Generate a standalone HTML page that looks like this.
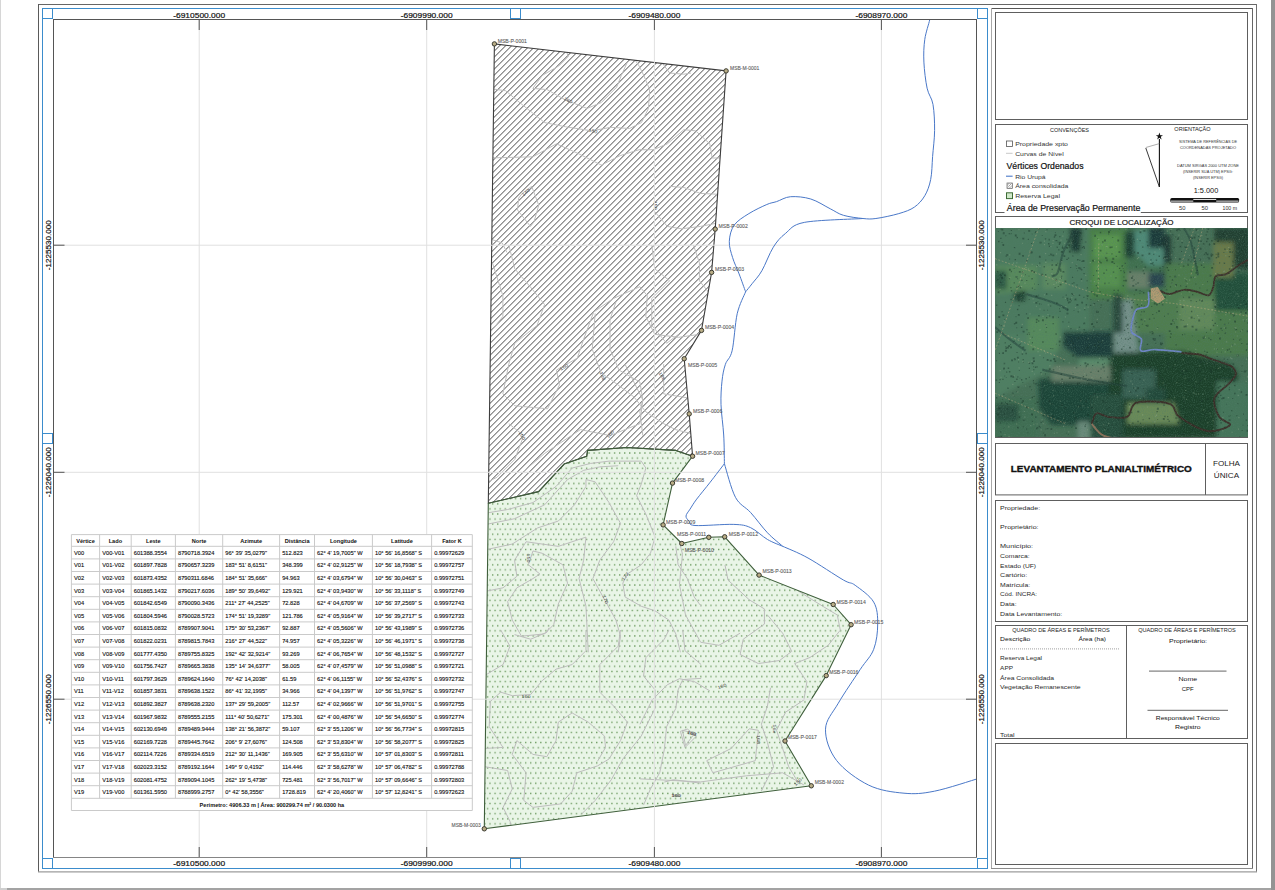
<!DOCTYPE html>
<html><head><meta charset="utf-8"><style>
html,body{margin:0;padding:0;background:#fff;}
body{width:1275px;height:890px;overflow:hidden;position:relative;}
svg{position:absolute;left:0;top:0;}
text{font-family:"Liberation Sans",sans-serif;}
</style></head><body>
<svg width="1275" height="890" viewBox="0 0 1275 890">
<defs>
<pattern id="hatch" patternUnits="userSpaceOnUse" width="6" height="6" patternTransform="translate(-0.6,0)">
<path d="M-1,7 L7,-1 M-4,4 L4,-4 M2,10 L10,2" stroke="#333" stroke-width="0.9"/>
</pattern>
<pattern id="dots" patternUnits="userSpaceOnUse" width="5.08" height="10.16" x="0" y="-1.4">
<rect x="0" y="0" width="5.08" height="10.16" fill="#e9f5e7"/>
<rect x="1.7" y="1.6" width="1.3" height="1.4" fill="#6a9a5e"/>
<rect x="4.24" y="6.68" width="1.3" height="1.4" fill="#6a9a5e"/>
<rect x="-0.84" y="6.68" width="1.3" height="1.4" fill="#6a9a5e"/>
</pattern>
<pattern id="lhatch" patternUnits="userSpaceOnUse" width="2.5" height="2.5">
<path d="M-0.5,3 L3,-0.5" stroke="#666" stroke-width="0.6"/>
</pattern>
<filter id="blur1"><feGaussianBlur stdDeviation="1.2"/></filter>
<filter id="blur2" x="-10%" y="-10%" width="120%" height="120%"><feGaussianBlur stdDeviation="9"/></filter>
<filter id="noise" x="0" y="0" width="100%" height="100%"><feTurbulence type="fractalNoise" baseFrequency="0.9" numOctaves="2" seed="3"/><feColorMatrix type="matrix" values="0 0 0 0 0.08  0 0 0 0 0.2  0 0 0 0 0.14  0 0 0 -2.2 1.25"/></filter>
<clipPath id="mapclip"><rect x="54" y="20" width="922" height="837"/></clipPath>
<clipPath id="satclip"><rect x="995" y="228" width="253" height="209"/></clipPath>
</defs>
<rect x="0" y="0" width="1" height="890" stroke="none" fill="#d6d6d6" stroke-width="1"/>
<rect x="7" y="888" width="1264" height="2" stroke="none" fill="#a3a3a3" stroke-width="1"/>
<rect x="0" y="888" width="7" height="2" stroke="none" fill="#cfcfcf" stroke-width="1"/>
<rect x="1271" y="0" width="4" height="890" stroke="none" fill="#939393" stroke-width="1"/>
<line x1="38" y1="4.5" x2="1257" y2="4.5" stroke="#666" stroke-width="1"/>
<line x1="38.5" y1="4" x2="38.5" y2="872" stroke="#5a5a5a" stroke-width="1"/>
<line x1="1256.5" y1="4" x2="1256.5" y2="872" stroke="#707070" stroke-width="1"/>
<line x1="38" y1="871.8" x2="1257" y2="871.8" stroke="#9c9c9c" stroke-width="1.2"/>
<rect x="53.5" y="19.5" width="923.0" height="838.0" stroke="none" fill="#fff" stroke-width="1"/>
<g clip-path="url(#mapclip)">
<path d="M494.4,43.9 L726.1,70.9 L715.2,229.1 L711.6,272.4 L701.5,330.4 L684.2,358.8 L689.2,413.9 L692.6,456.2 L675.9,450.4 L626.9,447.5 L587.6,450.4 L586.7,456.3 L564.1,464.1 L538.6,491.6 L488.3,503.3 Z" fill="url(#hatch)" stroke="none"/>
<path d="M488.3,503.3 L538.6,491.6 L564.1,464.1 L586.7,456.3 L587.6,450.4 L626.9,447.5 L675.9,450.4 L692.6,456.2 L672.5,483.1 L663.1,524.9 L681.8,543.5 L708.8,537.3 L724.7,536.8 L759.1,575.1 L833.2,604.5 L851.1,624.7 L826.2,675.6 L785.0,741.0 L811.3,785.8 L484.3,828.8 Z" fill="url(#dots)" stroke="none"/>
<clipPath id="propclip"><path d="M494.4,43.9 L726.1,70.9 L715.2,229.1 L711.6,272.4 L701.5,330.4 L684.2,358.8 L689.2,413.9 L692.6,456.2 L675.9,450.4 L626.9,447.5 L587.6,450.4 L586.7,456.3 L564.1,464.1 L538.6,491.6 L488.3,503.3 Z M488.3,503.3 L538.6,491.6 L564.1,464.1 L586.7,456.3 L587.6,450.4 L626.9,447.5 L675.9,450.4 L692.6,456.2 L672.5,483.1 L663.1,524.9 L681.8,543.5 L708.8,537.3 L724.7,536.8 L759.1,575.1 L833.2,604.5 L851.1,624.7 L826.2,675.6 L785.0,741.0 L811.3,785.8 L484.3,828.8 Z"/></clipPath>
<g clip-path="url(#propclip)">
<g transform="translate(488,40) scale(0.23599)">
<path d="M190.0,205.0 L250.0,210.0 L330.0,255.0 L420.0,290.0 L480.0,265.0 L545.0,200.0 L565.0,150.0 L590.0,95.0" fill="none" stroke="#bdbdbd" stroke-width="1" vector-effect="non-scaling-stroke" stroke-linejoin="round"/>
<path d="M190.0,205.0 L230.0,150.0 L300.0,110.0 L340.0,70.0 L330.0,40.0" fill="none" stroke="#bdbdbd" stroke-width="1" vector-effect="non-scaling-stroke" stroke-linejoin="round"/>
<path d="M0.0,205.0 L75.0,215.0 L140.0,270.0 L240.0,350.0 L330.0,368.0 L440.0,385.0 L520.0,370.0 L600.0,375.0 L650.0,350.0 L680.0,290.0 L685.0,210.0 L660.0,150.0 L640.0,110.0 L620.0,80.0" fill="none" stroke="#bdbdbd" stroke-width="1" vector-effect="non-scaling-stroke" stroke-linejoin="round"/>
<path d="M0.0,500.0 L190.0,495.0 L290.0,440.0 L380.0,480.0 L480.0,530.0 L560.0,490.0 L640.0,465.0 L700.0,465.0 L760.0,440.0 L830.0,380.0 L880.0,385.0 L940.0,440.0 L950.0,500.0 L1000.0,500.0" fill="none" stroke="#bdbdbd" stroke-width="1" vector-effect="non-scaling-stroke" stroke-linejoin="round"/>
<path d="M145.0,650.0 L185.0,620.0 L215.0,700.0 L195.0,770.0 L180.0,790.0 L125.0,720.0 L130.0,670.0 Z" fill="none" stroke="#bdbdbd" stroke-width="1" vector-effect="non-scaling-stroke" stroke-linejoin="round"/>
<path d="M740.0,100.0 L770.0,140.0 L830.0,145.0 L860.0,140.0" fill="none" stroke="#bdbdbd" stroke-width="1" vector-effect="non-scaling-stroke" stroke-linejoin="round"/>
<path d="M770.0,620.0 L830.0,625.0 L900.0,650.0 L1000.0,655.0" fill="none" stroke="#bdbdbd" stroke-width="1" vector-effect="non-scaling-stroke" stroke-linejoin="round"/>
<path d="M700.0,720.0 L760.0,790.0 L820.0,800.0 L900.0,790.0 L1000.0,770.0" fill="none" stroke="#bdbdbd" stroke-width="1" vector-effect="non-scaling-stroke" stroke-linejoin="round"/>
<path d="M0.0,840.0 L60.0,860.0 L80.0,900.0" fill="none" stroke="#bdbdbd" stroke-width="1" vector-effect="non-scaling-stroke" stroke-linejoin="round"/>
<g transform="translate(340,255) rotate(28) scale(4.2375)"><text x="0" y="1.6" font-size="4.4" text-anchor="middle" fill="#444" textLength="9" lengthAdjust="spacingAndGlyphs">160</text></g>
<g transform="translate(445,385) rotate(15) scale(4.2375)"><text x="0" y="1.6" font-size="4.4" text-anchor="middle" fill="#444" textLength="9" lengthAdjust="spacingAndGlyphs">150</text></g>
<g transform="translate(160,645) rotate(-42) scale(4.2375)"><text x="0" y="1.6" font-size="4.4" text-anchor="middle" fill="#444" textLength="9" lengthAdjust="spacingAndGlyphs">140</text></g>
<g transform="translate(710,700) rotate(90) scale(4.2375)"><text x="0" y="1.6" font-size="4.4" text-anchor="middle" fill="#444" textLength="9" lengthAdjust="spacingAndGlyphs">150</text></g>
</g>
<g transform="translate(485,245) scale(0.29780)">
<path d="M25.0,60.0 L60.0,170.0 L60.0,240.0 L20.0,290.0" fill="none" stroke="#bdbdbd" stroke-width="1" vector-effect="non-scaling-stroke" stroke-linejoin="round"/>
<path d="M80.0,0.0 L100.0,80.0 L160.0,150.0 L200.0,200.0 L175.0,270.0 L100.0,330.0 L80.0,400.0 L60.0,500.0 L100.0,540.0 L210.0,550.0 L250.0,470.0 L240.0,420.0 L310.0,380.0 L330.0,320.0 L365.0,225.0 L430.0,180.0 L520.0,140.0 L545.0,170.0 L540.0,240.0 L570.0,300.0 L650.0,310.0 L720.0,300.0" fill="none" stroke="#bdbdbd" stroke-width="1" vector-effect="non-scaling-stroke" stroke-linejoin="round"/>
<path d="M560.0,0.0 L570.0,80.0 L620.0,120.0 L560.0,180.0 L560.0,270.0 L610.0,330.0 L650.0,300.0" fill="none" stroke="#bdbdbd" stroke-width="1" vector-effect="non-scaling-stroke" stroke-linejoin="round"/>
<path d="M700.0,0.0 L720.0,60.0 L720.0,120.0 L760.0,170.0" fill="none" stroke="#bdbdbd" stroke-width="1" vector-effect="non-scaling-stroke" stroke-linejoin="round"/>
<path d="M370.0,230.0 L360.0,350.0 L390.0,430.0 L420.0,450.0 L500.0,510.0 L540.0,560.0 L600.0,600.0 L640.0,620.0 L720.0,640.0" fill="none" stroke="#bdbdbd" stroke-width="1" vector-effect="non-scaling-stroke" stroke-linejoin="round"/>
<path d="M440.0,190.0 L420.0,250.0 L420.0,350.0 L450.0,420.0 L520.0,460.0 L530.0,520.0 L520.0,560.0 L530.0,640.0" fill="none" stroke="#bdbdbd" stroke-width="1" vector-effect="non-scaling-stroke" stroke-linejoin="round"/>
<path d="M470.0,400.0 L500.0,460.0 L530.0,520.0 L520.0,600.0 L420.0,640.0 L320.0,620.0 L200.0,700.0 L130.0,760.0" fill="none" stroke="#bdbdbd" stroke-width="1" vector-effect="non-scaling-stroke" stroke-linejoin="round"/>
<path d="M80.0,600.0 L130.0,640.0 L100.0,720.0 L40.0,780.0 L0.0,800.0" fill="none" stroke="#bdbdbd" stroke-width="1" vector-effect="non-scaling-stroke" stroke-linejoin="round"/>
<path d="M600.0,400.0 L600.0,500.0 L720.0,520.0" fill="none" stroke="#bdbdbd" stroke-width="1" vector-effect="non-scaling-stroke" stroke-linejoin="round"/>
<g transform="translate(265,410) rotate(-30) scale(3.3580)"><text x="0" y="1.6" font-size="4.4" text-anchor="middle" fill="#444" textLength="9" lengthAdjust="spacingAndGlyphs">150</text></g>
<g transform="translate(395,440) rotate(70) scale(3.3580)"><text x="0" y="1.6" font-size="4.4" text-anchor="middle" fill="#444" textLength="9" lengthAdjust="spacingAndGlyphs">146</text></g>
<g transform="translate(595,440) rotate(60) scale(3.3580)"><text x="0" y="1.6" font-size="4.4" text-anchor="middle" fill="#444" textLength="9" lengthAdjust="spacingAndGlyphs">146</text></g>
<g transform="translate(125,640) rotate(60) scale(3.3580)"><text x="0" y="1.6" font-size="4.4" text-anchor="middle" fill="#444" textLength="9" lengthAdjust="spacingAndGlyphs">150</text></g>
<g transform="translate(420,635) rotate(-50) scale(3.3580)"><text x="0" y="1.6" font-size="4.4" text-anchor="middle" fill="#444" textLength="9" lengthAdjust="spacingAndGlyphs">150</text></g>
</g>
<g transform="translate(480,445) scale(0.23036)">
<path d="M0.0,300.0 L120.0,280.0 L230.0,250.0 L330.0,180.0 L400.0,100.0 L480.0,80.0 L560.0,70.0 L700.0,70.0 L720.0,100.0 L700.0,170.0 L680.0,220.0 L720.0,300.0 L760.0,400.0 L740.0,470.0 L700.0,520.0 L640.0,560.0 L620.0,600.0 L630.0,660.0 L700.0,700.0 L760.0,720.0 L820.0,760.0 L850.0,820.0 L870.0,900.0" fill="none" stroke="#bdbdbd" stroke-width="1" vector-effect="non-scaling-stroke" stroke-linejoin="round"/>
<path d="M0.0,350.0 L150.0,320.0 L280.0,260.0 L380.0,150.0 L450.0,110.0 L520.0,95.0 L600.0,90.0" fill="none" stroke="#bdbdbd" stroke-width="1" vector-effect="non-scaling-stroke" stroke-linejoin="round"/>
<path d="M0.0,460.0 L140.0,430.0 L250.0,360.0 L340.0,330.0 L410.0,260.0 L460.0,180.0 L460.0,150.0 L500.0,160.0 L560.0,250.0 L610.0,340.0 L580.0,420.0 L520.0,500.0 L490.0,580.0 L540.0,670.0 L590.0,760.0 L610.0,830.0 L600.0,900.0" fill="none" stroke="#bdbdbd" stroke-width="1" vector-effect="non-scaling-stroke" stroke-linejoin="round"/>
<path d="M0.0,640.0 L100.0,620.0 L160.0,570.0 L150.0,500.0 L200.0,420.0 L340.0,440.0 L460.0,400.0 L450.0,500.0 L430.0,580.0 L460.0,700.0 L470.0,900.0" fill="none" stroke="#bdbdbd" stroke-width="1" vector-effect="non-scaling-stroke" stroke-linejoin="round"/>
<path d="M230.0,460.0 L270.0,470.0 L360.0,520.0 L380.0,600.0 L340.0,690.0 L320.0,780.0 L280.0,820.0 L180.0,830.0 L140.0,760.0 L120.0,680.0 L160.0,620.0 L230.0,580.0 L260.0,560.0 L210.0,520.0 Z" fill="none" stroke="#bdbdbd" stroke-width="1" vector-effect="non-scaling-stroke" stroke-linejoin="round"/>
<path d="M850.0,440.0 L860.0,520.0 L900.0,580.0 L930.0,660.0 L960.0,700.0" fill="none" stroke="#bdbdbd" stroke-width="1" vector-effect="non-scaling-stroke" stroke-linejoin="round"/>
<g transform="translate(210,490) rotate(90) scale(4.3410)"><text x="0" y="1.6" font-size="4.4" text-anchor="middle" fill="#444" textLength="9" lengthAdjust="spacingAndGlyphs">150</text></g>
<g transform="translate(545,670) rotate(70) scale(4.3410)"><text x="0" y="1.6" font-size="4.4" text-anchor="middle" fill="#444" textLength="9" lengthAdjust="spacingAndGlyphs">170</text></g>
<g transform="translate(630,570) rotate(-50) scale(4.3410)"><text x="0" y="1.6" font-size="4.4" text-anchor="middle" fill="#444" textLength="9" lengthAdjust="spacingAndGlyphs">172</text></g>
</g>
<g transform="translate(480,630) scale(0.23036)">
<path d="M90.0,0.0 L130.0,70.0 L100.0,150.0 L0.0,210.0" fill="none" stroke="#bdbdbd" stroke-width="1" vector-effect="non-scaling-stroke" stroke-linejoin="round"/>
<path d="M150.0,20.0 L220.0,40.0 L290.0,10.0 L300.0,-10.0" fill="none" stroke="#bdbdbd" stroke-width="1" vector-effect="non-scaling-stroke" stroke-linejoin="round"/>
<path d="M460.0,0.0 L460.0,90.0 L400.0,150.0 L330.0,170.0 L270.0,220.0 L220.0,280.0 L140.0,285.0 L90.0,270.0 L45.0,310.0 L40.0,420.0 L100.0,510.0 L0.0,515.0" fill="none" stroke="#bdbdbd" stroke-width="1" vector-effect="non-scaling-stroke" stroke-linejoin="round"/>
<path d="M610.0,0.0 L600.0,70.0 L520.0,150.0 L520.0,270.0 L580.0,330.0 L640.0,400.0 L610.0,480.0 L560.0,560.0 L510.0,590.0 L420.0,620.0 L400.0,700.0 L350.0,755.0 L230.0,770.0 L190.0,740.0 L200.0,620.0 L140.0,540.0 L160.0,480.0 L230.0,540.0 L290.0,550.0 L330.0,480.0 L340.0,400.0 L400.0,360.0 L470.0,400.0 L540.0,460.0 L545.0,510.0 L510.0,570.0" fill="none" stroke="#bdbdbd" stroke-width="1" vector-effect="non-scaling-stroke" stroke-linejoin="round"/>
<path d="M820.0,0.0 L800.0,40.0 L720.0,120.0 L710.0,200.0 L760.0,260.0 L760.0,340.0 L700.0,460.0 L620.0,560.0 L570.0,650.0 L500.0,740.0 L440.0,800.0" fill="none" stroke="#bdbdbd" stroke-width="1" vector-effect="non-scaling-stroke" stroke-linejoin="round"/>
<path d="M880.0,0.0 L890.0,90.0 L960.0,150.0" fill="none" stroke="#bdbdbd" stroke-width="1" vector-effect="non-scaling-stroke" stroke-linejoin="round"/>
<path d="M960.0,210.0 L880.0,215.0 L860.0,260.0 L850.0,340.0 L810.0,420.0 L800.0,520.0 L780.0,620.0 L740.0,690.0 L710.0,760.0" fill="none" stroke="#bdbdbd" stroke-width="1" vector-effect="non-scaling-stroke" stroke-linejoin="round"/>
<path d="M0.0,590.0 L120.0,610.0 L140.0,690.0 L100.0,770.0 L130.0,830.0 L150.0,900.0" fill="none" stroke="#bdbdbd" stroke-width="1" vector-effect="non-scaling-stroke" stroke-linejoin="round"/>
<path d="M800.0,660.0 L840.0,650.0 L960.0,665.0" fill="none" stroke="#bdbdbd" stroke-width="1" vector-effect="non-scaling-stroke" stroke-linejoin="round"/>
<path d="M870.0,440.0 L900.0,430.0 L940.0,460.0 L890.0,510.0 Z" fill="none" stroke="#bdbdbd" stroke-width="1" vector-effect="non-scaling-stroke" stroke-linejoin="round"/>
<g transform="translate(200,288) rotate(0) scale(4.3410)"><text x="0" y="1.6" font-size="4.4" text-anchor="middle" fill="#444" textLength="9" lengthAdjust="spacingAndGlyphs">160</text></g>
<g transform="translate(850,718) rotate(0) scale(4.3410)"><text x="0" y="1.6" font-size="4.4" text-anchor="middle" fill="#444" textLength="9" lengthAdjust="spacingAndGlyphs">160</text></g>
<g transform="translate(920,448) rotate(15) scale(4.3410)"><text x="0" y="1.6" font-size="4.4" text-anchor="middle" fill="#444" textLength="9" lengthAdjust="spacingAndGlyphs">168</text></g>
</g>
<g transform="translate(640,530) scale(0.30349)">
<path d="M280.0,115.0 L290.0,165.0 L360.0,230.0 L410.0,260.0 L410.0,310.0 L340.0,360.0 L330.0,410.0 L390.0,440.0 L460.0,430.0 L500.0,400.0 L470.0,340.0 L420.0,280.0" fill="none" stroke="#bdbdbd" stroke-width="1" vector-effect="non-scaling-stroke" stroke-linejoin="round"/>
<path d="M520.0,200.0 L600.0,250.0 L650.0,280.0 L660.0,330.0 L620.0,380.0 L560.0,420.0 L510.0,440.0 L550.0,500.0 L540.0,560.0 L480.0,600.0 L450.0,660.0 L470.0,720.0 L490.0,780.0 L520.0,830.0" fill="none" stroke="#bdbdbd" stroke-width="1" vector-effect="non-scaling-stroke" stroke-linejoin="round"/>
<path d="M120.0,0.0 L140.0,80.0 L130.0,180.0 L150.0,280.0 L200.0,370.0 L260.0,380.0 L330.0,340.0" fill="none" stroke="#bdbdbd" stroke-width="1" vector-effect="non-scaling-stroke" stroke-linejoin="round"/>
<path d="M0.0,640.0 L40.0,560.0 L90.0,510.0 L130.0,490.0 L180.0,500.0 L230.0,530.0" fill="none" stroke="#bdbdbd" stroke-width="1" vector-effect="non-scaling-stroke" stroke-linejoin="round"/>
<path d="M140.0,660.0 L180.0,670.0 L150.0,710.0 Z" fill="none" stroke="#bdbdbd" stroke-width="1" vector-effect="non-scaling-stroke" stroke-linejoin="round"/>
<path d="M220.0,760.0 L240.0,800.0 L380.0,760.0 L390.0,660.0 L360.0,655.0 L300.0,720.0 Z" fill="none" stroke="#bdbdbd" stroke-width="1" vector-effect="non-scaling-stroke" stroke-linejoin="round"/>
<path d="M0.0,820.0 L200.0,830.0 L350.0,810.0 L470.0,800.0 L540.0,840.0" fill="none" stroke="#bdbdbd" stroke-width="1" vector-effect="non-scaling-stroke" stroke-linejoin="round"/>
<path d="M430.0,520.0 L420.0,580.0 L400.0,640.0 L420.0,700.0 L440.0,780.0 L400.0,860.0" fill="none" stroke="#bdbdbd" stroke-width="1" vector-effect="non-scaling-stroke" stroke-linejoin="round"/>
<g transform="translate(270,515) rotate(-20) scale(3.2950)"><text x="0" y="1.6" font-size="4.4" text-anchor="middle" fill="#444" textLength="9" lengthAdjust="spacingAndGlyphs">160</text></g>
<g transform="translate(170,670) rotate(15) scale(3.2950)"><text x="0" y="1.6" font-size="4.4" text-anchor="middle" fill="#444" textLength="9" lengthAdjust="spacingAndGlyphs">160</text></g>
<g transform="translate(390,690) rotate(90) scale(3.2950)"><text x="0" y="1.6" font-size="4.4" text-anchor="middle" fill="#444" textLength="9" lengthAdjust="spacingAndGlyphs">168</text></g>
<g transform="translate(445,655) rotate(90) scale(3.2950)"><text x="0" y="1.6" font-size="4.4" text-anchor="middle" fill="#444" textLength="9" lengthAdjust="spacingAndGlyphs">16x</text></g>
<g transform="translate(520,830) rotate(-45) scale(3.2950)"><text x="0" y="1.6" font-size="4.4" text-anchor="middle" fill="#444" textLength="9" lengthAdjust="spacingAndGlyphs">150</text></g>
<g transform="translate(120,875) rotate(0) scale(3.2950)"><text x="0" y="1.6" font-size="4.4" text-anchor="middle" fill="#444" textLength="9" lengthAdjust="spacingAndGlyphs">160</text></g>
</g>
</g>
<path d="M494.4,43.9 L726.1,70.9 L715.2,229.1 L711.6,272.4 L701.5,330.4 L684.2,358.8 L689.2,413.9 L692.6,456.2 L675.9,450.4 L626.9,447.5 L587.6,450.4 L586.7,456.3 L564.1,464.1 L538.6,491.6 L488.3,503.3 Z" fill="none" stroke="#3d3d3d" stroke-width="1.1" stroke-linejoin="round"/>
<path d="M488.3,503.3 L538.6,491.6 L564.1,464.1 L586.7,456.3 L587.6,450.4 L626.9,447.5 L675.9,450.4 L692.6,456.2 L672.5,483.1 L663.1,524.9 L681.8,543.5 L708.8,537.3 L724.7,536.8 L759.1,575.1 L833.2,604.5 L851.1,624.7 L826.2,675.6 L785.0,741.0 L811.3,785.8 L484.3,828.8 Z" fill="none" stroke="#3f5f3b" stroke-width="1.1" stroke-linejoin="round"/>
<line x1="199.2" y1="19" x2="199.2" y2="857" stroke="#e0e0e0" stroke-width="1"/>
<line x1="426.7" y1="19" x2="426.7" y2="857" stroke="#e0e0e0" stroke-width="1"/>
<line x1="654.4" y1="19" x2="654.4" y2="857" stroke="#e0e0e0" stroke-width="1"/>
<line x1="881.4" y1="19" x2="881.4" y2="857" stroke="#e0e0e0" stroke-width="1"/>
<line x1="53" y1="245.2" x2="977" y2="245.2" stroke="#e0e0e0" stroke-width="1"/>
<line x1="53" y1="472.3" x2="977" y2="472.3" stroke="#e0e0e0" stroke-width="1"/>
<line x1="53" y1="699.2" x2="977" y2="699.2" stroke="#e0e0e0" stroke-width="1"/>
<path d="M929.7,15.0 C929.7,15.8 930.5,15.8 929.7,19.8 C928.9,23.9 925.8,32.2 924.8,39.3 C923.8,46.3 923.5,54.0 923.9,62.1 C924.3,70.2 925.6,81.1 927.1,88.2 C928.6,95.3 931.8,97.4 933.0,104.5 C934.2,111.6 934.7,121.9 934.6,130.6 C934.5,139.3 933.2,148.5 932.6,156.6 C932.0,164.7 932.0,172.9 930.7,179.4 C929.4,185.9 927.5,191.1 924.8,195.7 C922.1,200.3 918.7,204.1 914.4,207.1 C910.1,210.1 905.2,211.7 898.8,213.6 C892.4,215.5 881.9,217.7 875.9,218.5 C869.9,219.3 868.3,219.0 862.9,218.5 C857.5,218.0 848.8,216.9 843.4,215.3 C838.0,213.7 835.7,211.5 830.3,208.8 C824.9,206.1 817.4,201.0 810.8,199.0 C804.2,197.0 796.3,196.3 790.6,196.7 C784.9,197.1 780.6,200.3 776.6,201.6 C772.6,202.9 771.4,202.5 766.8,204.5 C762.2,206.5 754.3,210.2 748.9,213.6 C743.5,217.0 737.5,220.5 734.2,225.1 C730.9,229.7 729.6,235.9 729.3,241.3 C729.0,246.7 731.0,252.2 732.6,257.6 C734.2,263.0 736.9,268.2 739.1,273.9 C741.3,279.6 744.5,288.8 745.6,291.8" fill="none" stroke="#4a78c8" stroke-width="1" stroke-linejoin="round"/>
<path d="M862.9,218.5 C853.1,219.2 817.2,219.9 804.3,222.4 C791.4,224.9 790.6,229.4 785.4,233.5 C780.2,237.6 777.2,241.0 773.3,247.2 C769.4,253.4 765.4,264.6 761.9,270.7 C758.4,276.8 754.8,280.2 752.1,283.7 C749.4,287.2 746.7,290.4 745.6,291.8" fill="none" stroke="#4a78c8" stroke-width="1" stroke-linejoin="round"/>
<path d="M745.6,291.8 C744.2,295.4 739.5,303.9 737.2,313.7 C735.0,323.5 734.1,342.4 732.1,350.8 C730.1,359.2 727.1,359.2 725.4,364.3 C723.7,369.4 722.7,374.4 722.0,381.1 C721.3,387.8 720.7,395.7 721.0,404.7 C721.3,413.7 723.1,425.2 723.7,435.0 C724.3,444.8 724.3,458.9 724.4,463.7" fill="none" stroke="#4a78c8" stroke-width="1" stroke-linejoin="round"/>
<path d="M724.4,463.7 C722.0,466.8 714.8,476.3 710.2,482.2 C705.6,488.1 700.1,494.6 696.7,499.1 C693.3,503.6 691.8,506.4 690.0,509.2 C688.2,512.0 686.2,514.0 686.0,516.0 C685.8,518.0 687.5,519.4 689.0,521.0 C690.5,522.6 687.5,524.9 695.0,525.5 C702.5,526.1 724.5,524.0 733.8,524.4 C743.1,524.8 745.1,525.2 750.7,527.7 C756.3,530.2 762.2,536.4 767.5,539.5 C772.8,542.6 780.2,545.2 782.7,546.3" fill="none" stroke="#4a78c8" stroke-width="1" stroke-linejoin="round"/>
<path d="M724.4,463.7 C726.2,469.3 731.1,489.2 735.5,497.4 C739.9,505.5 745.4,506.7 750.7,512.6 C756.0,518.5 762.2,527.2 767.5,532.8 C772.8,538.4 780.2,544.0 782.7,546.3" fill="none" stroke="#4a78c8" stroke-width="1" stroke-linejoin="round"/>
<path d="M782.7,546.3 C786.9,548.2 797.9,552.4 808.0,558.0 C818.1,563.6 835.5,575.5 843.4,580.0 C851.3,584.5 850.2,581.6 855.2,585.3 C860.2,589.0 870.0,595.6 873.7,602.1 C877.5,608.6 877.7,616.1 877.7,624.0 C877.7,631.9 876.6,641.7 873.7,649.3 C870.8,656.9 866.1,660.5 860.2,669.5 C854.3,678.5 844.1,693.2 838.3,703.2 C832.5,713.2 825.8,719.7 825.5,729.2 C825.2,738.8 829.4,751.2 836.6,760.5 C843.8,769.8 857.4,779.6 868.6,785.1 C879.8,790.6 893.0,792.2 904.0,793.2 C915.0,794.2 921.7,793.7 934.4,791.2 C947.1,788.7 972.4,780.2 980.0,778.0" fill="none" stroke="#4a78c8" stroke-width="1" stroke-linejoin="round"/>
<circle cx="494.4" cy="43.9" r="2.2" fill="#b9ad86" stroke="#3a3a30" stroke-width="1"/>
<circle cx="726.1" cy="70.9" r="2.2" fill="#b9ad86" stroke="#3a3a30" stroke-width="1"/>
<circle cx="715.2" cy="229.1" r="2.2" fill="#b9ad86" stroke="#3a3a30" stroke-width="1"/>
<circle cx="711.6" cy="272.4" r="2.2" fill="#b9ad86" stroke="#3a3a30" stroke-width="1"/>
<circle cx="701.5" cy="330.4" r="2.2" fill="#b9ad86" stroke="#3a3a30" stroke-width="1"/>
<circle cx="684.2" cy="358.8" r="2.2" fill="#b9ad86" stroke="#3a3a30" stroke-width="1"/>
<circle cx="689.2" cy="413.9" r="2.2" fill="#b9ad86" stroke="#3a3a30" stroke-width="1"/>
<circle cx="692.6" cy="456.2" r="2.2" fill="#b9ad86" stroke="#3a3a30" stroke-width="1"/>
<circle cx="672.5" cy="483.1" r="2.2" fill="#b9ad86" stroke="#3a3a30" stroke-width="1"/>
<circle cx="663.1" cy="524.9" r="2.2" fill="#b9ad86" stroke="#3a3a30" stroke-width="1"/>
<circle cx="681.8" cy="543.5" r="2.2" fill="#b9ad86" stroke="#3a3a30" stroke-width="1"/>
<circle cx="708.8" cy="537.3" r="2.2" fill="#b9ad86" stroke="#3a3a30" stroke-width="1"/>
<circle cx="724.7" cy="536.8" r="2.2" fill="#b9ad86" stroke="#3a3a30" stroke-width="1"/>
<circle cx="759.1" cy="575.1" r="2.2" fill="#b9ad86" stroke="#3a3a30" stroke-width="1"/>
<circle cx="833.2" cy="604.5" r="2.2" fill="#b9ad86" stroke="#3a3a30" stroke-width="1"/>
<circle cx="851.1" cy="624.7" r="2.2" fill="#b9ad86" stroke="#3a3a30" stroke-width="1"/>
<circle cx="826.2" cy="675.6" r="2.2" fill="#b9ad86" stroke="#3a3a30" stroke-width="1"/>
<circle cx="785.0" cy="741.0" r="2.2" fill="#b9ad86" stroke="#3a3a30" stroke-width="1"/>
<circle cx="811.3" cy="785.8" r="2.2" fill="#b9ad86" stroke="#3a3a30" stroke-width="1"/>
<circle cx="484.3" cy="828.8" r="2.2" fill="#b9ad86" stroke="#3a3a30" stroke-width="1"/>
<text x="497.7" y="42.6" font-size="5.0" textLength="29.2" lengthAdjust="spacingAndGlyphs" fill="#5e5e5e" stroke="#5e5e5e" stroke-width="0.1">MSB-P-0001</text>
<text x="730.0" y="69.8" font-size="5.0" textLength="29.2" lengthAdjust="spacingAndGlyphs" fill="#5e5e5e" stroke="#5e5e5e" stroke-width="0.1">MSB-M-0001</text>
<text x="718.6" y="227.5" font-size="5.0" textLength="29.2" lengthAdjust="spacingAndGlyphs" fill="#5e5e5e" stroke="#5e5e5e" stroke-width="0.1">MSB-P-0002</text>
<text x="715.0" y="270.8" font-size="5.0" textLength="29.2" lengthAdjust="spacingAndGlyphs" fill="#5e5e5e" stroke="#5e5e5e" stroke-width="0.1">MSB-P-0003</text>
<text x="704.9" y="329.4" font-size="5.0" textLength="29.2" lengthAdjust="spacingAndGlyphs" fill="#5e5e5e" stroke="#5e5e5e" stroke-width="0.1">MSB-P-0004</text>
<text x="688.0" y="367.0" font-size="5.0" textLength="29.2" lengthAdjust="spacingAndGlyphs" fill="#5e5e5e" stroke="#5e5e5e" stroke-width="0.1">MSB-P-0005</text>
<text x="693.1" y="412.8" font-size="5.0" textLength="29.2" lengthAdjust="spacingAndGlyphs" fill="#5e5e5e" stroke="#5e5e5e" stroke-width="0.1">MSB-P-0006</text>
<text x="695.6" y="455.0" font-size="5.0" textLength="29.2" lengthAdjust="spacingAndGlyphs" fill="#5e5e5e" stroke="#5e5e5e" stroke-width="0.1">MSB-P-0007</text>
<text x="674.9" y="482.2" font-size="5.0" textLength="29.2" lengthAdjust="spacingAndGlyphs" fill="#5e5e5e" stroke="#5e5e5e" stroke-width="0.1">MSB-P-0008</text>
<text x="666.1" y="523.8" font-size="5.0" textLength="29.2" lengthAdjust="spacingAndGlyphs" fill="#5e5e5e" stroke="#5e5e5e" stroke-width="0.1">MSB-P-0009</text>
<text x="684.7" y="551.6" font-size="5.0" textLength="29.2" lengthAdjust="spacingAndGlyphs" fill="#5e5e5e" stroke="#5e5e5e" stroke-width="0.1">MSB-P-0010</text>
<text x="677.0" y="535.5" font-size="5.0" textLength="29.2" lengthAdjust="spacingAndGlyphs" fill="#5e5e5e" stroke="#5e5e5e" stroke-width="0.1">MSB-P-0011</text>
<text x="728.8" y="535.6" font-size="5.0" textLength="29.2" lengthAdjust="spacingAndGlyphs" fill="#5e5e5e" stroke="#5e5e5e" stroke-width="0.1">MSB-P-0012</text>
<text x="762.5" y="573.3" font-size="5.0" textLength="29.2" lengthAdjust="spacingAndGlyphs" fill="#5e5e5e" stroke="#5e5e5e" stroke-width="0.1">MSB-P-0013</text>
<text x="836.6" y="603.6" font-size="5.0" textLength="29.2" lengthAdjust="spacingAndGlyphs" fill="#5e5e5e" stroke="#5e5e5e" stroke-width="0.1">MSB-P-0014</text>
<text x="854.1" y="623.5" font-size="5.0" textLength="29.2" lengthAdjust="spacingAndGlyphs" fill="#5e5e5e" stroke="#5e5e5e" stroke-width="0.1">MSB-P-0015</text>
<text x="829.2" y="674.0" font-size="5.0" textLength="29.2" lengthAdjust="spacingAndGlyphs" fill="#5e5e5e" stroke="#5e5e5e" stroke-width="0.1">MSB-P-0016</text>
<text x="787.7" y="739.4" font-size="5.0" textLength="29.2" lengthAdjust="spacingAndGlyphs" fill="#5e5e5e" stroke="#5e5e5e" stroke-width="0.1">MSB-P-0017</text>
<text x="814.7" y="784.2" font-size="5.0" textLength="29.2" lengthAdjust="spacingAndGlyphs" fill="#5e5e5e" stroke="#5e5e5e" stroke-width="0.1">MSB-M-0002</text>
<text x="451.5" y="827.3" font-size="5.0" textLength="29.2" lengthAdjust="spacingAndGlyphs" fill="#5e5e5e" stroke="#5e5e5e" stroke-width="0.1">MSB-M-0003</text>
<line x1="199.2" y1="19.5" x2="199.2" y2="30" stroke="#555" stroke-width="1"/>
<line x1="199.2" y1="847" x2="199.2" y2="857.5" stroke="#555" stroke-width="1"/>
<line x1="426.7" y1="19.5" x2="426.7" y2="30" stroke="#555" stroke-width="1"/>
<line x1="426.7" y1="847" x2="426.7" y2="857.5" stroke="#555" stroke-width="1"/>
<line x1="654.4" y1="19.5" x2="654.4" y2="30" stroke="#555" stroke-width="1"/>
<line x1="654.4" y1="847" x2="654.4" y2="857.5" stroke="#555" stroke-width="1"/>
<line x1="881.4" y1="19.5" x2="881.4" y2="30" stroke="#555" stroke-width="1"/>
<line x1="881.4" y1="847" x2="881.4" y2="857.5" stroke="#555" stroke-width="1"/>
<line x1="53.5" y1="245.2" x2="64.5" y2="245.2" stroke="#555" stroke-width="1"/>
<line x1="966" y1="245.2" x2="976.5" y2="245.2" stroke="#555" stroke-width="1"/>
<line x1="53.5" y1="472.3" x2="64.5" y2="472.3" stroke="#555" stroke-width="1"/>
<line x1="966" y1="472.3" x2="976.5" y2="472.3" stroke="#555" stroke-width="1"/>
<line x1="53.5" y1="699.2" x2="64.5" y2="699.2" stroke="#555" stroke-width="1"/>
<line x1="966" y1="699.2" x2="976.5" y2="699.2" stroke="#555" stroke-width="1"/>
<rect x="71.4" y="534.6" width="400.9" height="275.9" stroke="none" fill="#fff" stroke-width="1"/>
<line x1="71.4" y1="534.6" x2="472.3" y2="534.6" stroke="#cacaca" stroke-width="1"/>
<line x1="71.4" y1="546.3" x2="472.3" y2="546.3" stroke="#cacaca" stroke-width="1"/>
<line x1="71.4" y1="558.9" x2="472.3" y2="558.9" stroke="#cacaca" stroke-width="1"/>
<line x1="71.4" y1="571.5" x2="472.3" y2="571.5" stroke="#cacaca" stroke-width="1"/>
<line x1="71.4" y1="584.0999999999999" x2="472.3" y2="584.0999999999999" stroke="#cacaca" stroke-width="1"/>
<line x1="71.4" y1="596.6999999999999" x2="472.3" y2="596.6999999999999" stroke="#cacaca" stroke-width="1"/>
<line x1="71.4" y1="609.3" x2="472.3" y2="609.3" stroke="#cacaca" stroke-width="1"/>
<line x1="71.4" y1="621.9" x2="472.3" y2="621.9" stroke="#cacaca" stroke-width="1"/>
<line x1="71.4" y1="634.5" x2="472.3" y2="634.5" stroke="#cacaca" stroke-width="1"/>
<line x1="71.4" y1="647.0999999999999" x2="472.3" y2="647.0999999999999" stroke="#cacaca" stroke-width="1"/>
<line x1="71.4" y1="659.6999999999999" x2="472.3" y2="659.6999999999999" stroke="#cacaca" stroke-width="1"/>
<line x1="71.4" y1="672.3" x2="472.3" y2="672.3" stroke="#cacaca" stroke-width="1"/>
<line x1="71.4" y1="684.9" x2="472.3" y2="684.9" stroke="#cacaca" stroke-width="1"/>
<line x1="71.4" y1="697.5" x2="472.3" y2="697.5" stroke="#cacaca" stroke-width="1"/>
<line x1="71.4" y1="710.0999999999999" x2="472.3" y2="710.0999999999999" stroke="#cacaca" stroke-width="1"/>
<line x1="71.4" y1="722.6999999999999" x2="472.3" y2="722.6999999999999" stroke="#cacaca" stroke-width="1"/>
<line x1="71.4" y1="735.3" x2="472.3" y2="735.3" stroke="#cacaca" stroke-width="1"/>
<line x1="71.4" y1="747.9" x2="472.3" y2="747.9" stroke="#cacaca" stroke-width="1"/>
<line x1="71.4" y1="760.5" x2="472.3" y2="760.5" stroke="#cacaca" stroke-width="1"/>
<line x1="71.4" y1="773.0999999999999" x2="472.3" y2="773.0999999999999" stroke="#cacaca" stroke-width="1"/>
<line x1="71.4" y1="785.6999999999999" x2="472.3" y2="785.6999999999999" stroke="#cacaca" stroke-width="1"/>
<line x1="71.4" y1="798.3" x2="472.3" y2="798.3" stroke="#cacaca" stroke-width="1"/>
<line x1="71.4" y1="810.5" x2="472.3" y2="810.5" stroke="#cacaca" stroke-width="1"/>
<line x1="71.4" y1="534.6" x2="71.4" y2="810.5" stroke="#cacaca" stroke-width="1"/>
<line x1="99.6" y1="534.6" x2="99.6" y2="798.3" stroke="#cacaca" stroke-width="1"/>
<line x1="131.2" y1="534.6" x2="131.2" y2="798.3" stroke="#cacaca" stroke-width="1"/>
<line x1="175.4" y1="534.6" x2="175.4" y2="798.3" stroke="#cacaca" stroke-width="1"/>
<line x1="222.7" y1="534.6" x2="222.7" y2="798.3" stroke="#cacaca" stroke-width="1"/>
<line x1="279.6" y1="534.6" x2="279.6" y2="798.3" stroke="#cacaca" stroke-width="1"/>
<line x1="314.5" y1="534.6" x2="314.5" y2="798.3" stroke="#cacaca" stroke-width="1"/>
<line x1="372.4" y1="534.6" x2="372.4" y2="798.3" stroke="#cacaca" stroke-width="1"/>
<line x1="431.6" y1="534.6" x2="431.6" y2="798.3" stroke="#cacaca" stroke-width="1"/>
<line x1="472.3" y1="534.6" x2="472.3" y2="810.5" stroke="#cacaca" stroke-width="1"/>
<text x="85.5" y="542.6" font-size="5.6" font-weight="bold" text-anchor="middle" fill="#111">Vértice</text>
<text x="115.4" y="542.6" font-size="5.6" font-weight="bold" text-anchor="middle" fill="#111">Lado</text>
<text x="153.3" y="542.6" font-size="5.6" font-weight="bold" text-anchor="middle" fill="#111">Leste</text>
<text x="199.1" y="542.6" font-size="5.6" font-weight="bold" text-anchor="middle" fill="#111">Norte</text>
<text x="251.2" y="542.6" font-size="5.6" font-weight="bold" text-anchor="middle" fill="#111">Azimute</text>
<text x="297.1" y="542.6" font-size="5.6" font-weight="bold" text-anchor="middle" fill="#111">Distância</text>
<text x="343.4" y="542.6" font-size="5.6" font-weight="bold" text-anchor="middle" fill="#111">Longitude</text>
<text x="402.0" y="542.6" font-size="5.6" font-weight="bold" text-anchor="middle" fill="#111">Latitude</text>
<text x="452.0" y="542.6" font-size="5.6" font-weight="bold" text-anchor="middle" fill="#111">Fator K</text>
<text x="74.0" y="554.7" font-size="5.7" fill="#111" stroke="#111" stroke-width="0.12">V00</text>
<text x="102.2" y="554.7" font-size="5.7" fill="#111" stroke="#111" stroke-width="0.12">V00-V01</text>
<text x="133.8" y="554.7" font-size="5.7" fill="#111" stroke="#111" stroke-width="0.12">601388.3554</text>
<text x="178.0" y="554.7" font-size="5.7" fill="#111" stroke="#111" stroke-width="0.12">8790718.3924</text>
<text x="225.3" y="554.7" font-size="5.7" fill="#111" stroke="#111" stroke-width="0.12">96° 39' 35,0279"</text>
<text x="282.2" y="554.7" font-size="5.7" fill="#111" stroke="#111" stroke-width="0.12">512.823</text>
<text x="317.1" y="554.7" font-size="5.7" fill="#111" stroke="#111" stroke-width="0.12">62° 4' 19,7005" W</text>
<text x="375.0" y="554.7" font-size="5.7" fill="#111" stroke="#111" stroke-width="0.12">10° 56' 16,8568" S</text>
<text x="434.2" y="554.7" font-size="5.7" fill="#111" stroke="#111" stroke-width="0.12">0.99972629</text>
<text x="74.0" y="567.3" font-size="5.7" fill="#111" stroke="#111" stroke-width="0.12">V01</text>
<text x="102.2" y="567.3" font-size="5.7" fill="#111" stroke="#111" stroke-width="0.12">V01-V02</text>
<text x="133.8" y="567.3" font-size="5.7" fill="#111" stroke="#111" stroke-width="0.12">601897.7828</text>
<text x="178.0" y="567.3" font-size="5.7" fill="#111" stroke="#111" stroke-width="0.12">8790657.3239</text>
<text x="225.3" y="567.3" font-size="5.7" fill="#111" stroke="#111" stroke-width="0.12">183° 51' 8,6151"</text>
<text x="282.2" y="567.3" font-size="5.7" fill="#111" stroke="#111" stroke-width="0.12">348.399</text>
<text x="317.1" y="567.3" font-size="5.7" fill="#111" stroke="#111" stroke-width="0.12">62° 4' 02,9125" W</text>
<text x="375.0" y="567.3" font-size="5.7" fill="#111" stroke="#111" stroke-width="0.12">10° 56' 18,7938" S</text>
<text x="434.2" y="567.3" font-size="5.7" fill="#111" stroke="#111" stroke-width="0.12">0.99972757</text>
<text x="74.0" y="579.9" font-size="5.7" fill="#111" stroke="#111" stroke-width="0.12">V02</text>
<text x="102.2" y="579.9" font-size="5.7" fill="#111" stroke="#111" stroke-width="0.12">V02-V03</text>
<text x="133.8" y="579.9" font-size="5.7" fill="#111" stroke="#111" stroke-width="0.12">601873.4352</text>
<text x="178.0" y="579.9" font-size="5.7" fill="#111" stroke="#111" stroke-width="0.12">8790311.6846</text>
<text x="225.3" y="579.9" font-size="5.7" fill="#111" stroke="#111" stroke-width="0.12">184° 51' 35,666"</text>
<text x="282.2" y="579.9" font-size="5.7" fill="#111" stroke="#111" stroke-width="0.12">94.963</text>
<text x="317.1" y="579.9" font-size="5.7" fill="#111" stroke="#111" stroke-width="0.12">62° 4' 03,6794" W</text>
<text x="375.0" y="579.9" font-size="5.7" fill="#111" stroke="#111" stroke-width="0.12">10° 56' 30,0463" S</text>
<text x="434.2" y="579.9" font-size="5.7" fill="#111" stroke="#111" stroke-width="0.12">0.99972751</text>
<text x="74.0" y="592.5" font-size="5.7" fill="#111" stroke="#111" stroke-width="0.12">V03</text>
<text x="102.2" y="592.5" font-size="5.7" fill="#111" stroke="#111" stroke-width="0.12">V03-V04</text>
<text x="133.8" y="592.5" font-size="5.7" fill="#111" stroke="#111" stroke-width="0.12">601865.1432</text>
<text x="178.0" y="592.5" font-size="5.7" fill="#111" stroke="#111" stroke-width="0.12">8790217.6036</text>
<text x="225.3" y="592.5" font-size="5.7" fill="#111" stroke="#111" stroke-width="0.12">189° 50' 39,6492"</text>
<text x="282.2" y="592.5" font-size="5.7" fill="#111" stroke="#111" stroke-width="0.12">129.921</text>
<text x="317.1" y="592.5" font-size="5.7" fill="#111" stroke="#111" stroke-width="0.12">62° 4' 03,9430" W</text>
<text x="375.0" y="592.5" font-size="5.7" fill="#111" stroke="#111" stroke-width="0.12">10° 56' 33,1118" S</text>
<text x="434.2" y="592.5" font-size="5.7" fill="#111" stroke="#111" stroke-width="0.12">0.99972749</text>
<text x="74.0" y="605.1" font-size="5.7" fill="#111" stroke="#111" stroke-width="0.12">V04</text>
<text x="102.2" y="605.1" font-size="5.7" fill="#111" stroke="#111" stroke-width="0.12">V04-V05</text>
<text x="133.8" y="605.1" font-size="5.7" fill="#111" stroke="#111" stroke-width="0.12">601842.6549</text>
<text x="178.0" y="605.1" font-size="5.7" fill="#111" stroke="#111" stroke-width="0.12">8790090.3436</text>
<text x="225.3" y="605.1" font-size="5.7" fill="#111" stroke="#111" stroke-width="0.12">211° 27' 44,2525"</text>
<text x="282.2" y="605.1" font-size="5.7" fill="#111" stroke="#111" stroke-width="0.12">72.828</text>
<text x="317.1" y="605.1" font-size="5.7" fill="#111" stroke="#111" stroke-width="0.12">62° 4' 04,6709" W</text>
<text x="375.0" y="605.1" font-size="5.7" fill="#111" stroke="#111" stroke-width="0.12">10° 56' 37,2569" S</text>
<text x="434.2" y="605.1" font-size="5.7" fill="#111" stroke="#111" stroke-width="0.12">0.99972743</text>
<text x="74.0" y="617.7" font-size="5.7" fill="#111" stroke="#111" stroke-width="0.12">V05</text>
<text x="102.2" y="617.7" font-size="5.7" fill="#111" stroke="#111" stroke-width="0.12">V05-V06</text>
<text x="133.8" y="617.7" font-size="5.7" fill="#111" stroke="#111" stroke-width="0.12">601804.5946</text>
<text x="178.0" y="617.7" font-size="5.7" fill="#111" stroke="#111" stroke-width="0.12">8790028.5723</text>
<text x="225.3" y="617.7" font-size="5.7" fill="#111" stroke="#111" stroke-width="0.12">174° 51' 19,3289"</text>
<text x="282.2" y="617.7" font-size="5.7" fill="#111" stroke="#111" stroke-width="0.12">121.786</text>
<text x="317.1" y="617.7" font-size="5.7" fill="#111" stroke="#111" stroke-width="0.12">62° 4' 05,9164" W</text>
<text x="375.0" y="617.7" font-size="5.7" fill="#111" stroke="#111" stroke-width="0.12">10° 56' 39,2717" S</text>
<text x="434.2" y="617.7" font-size="5.7" fill="#111" stroke="#111" stroke-width="0.12">0.99972733</text>
<text x="74.0" y="630.3" font-size="5.7" fill="#111" stroke="#111" stroke-width="0.12">V06</text>
<text x="102.2" y="630.3" font-size="5.7" fill="#111" stroke="#111" stroke-width="0.12">V06-V07</text>
<text x="133.8" y="630.3" font-size="5.7" fill="#111" stroke="#111" stroke-width="0.12">601815.0832</text>
<text x="178.0" y="630.3" font-size="5.7" fill="#111" stroke="#111" stroke-width="0.12">8789907.9041</text>
<text x="225.3" y="630.3" font-size="5.7" fill="#111" stroke="#111" stroke-width="0.12">175° 30' 53,2367"</text>
<text x="282.2" y="630.3" font-size="5.7" fill="#111" stroke="#111" stroke-width="0.12">92.887</text>
<text x="317.1" y="630.3" font-size="5.7" fill="#111" stroke="#111" stroke-width="0.12">62° 4' 05,5606" W</text>
<text x="375.0" y="630.3" font-size="5.7" fill="#111" stroke="#111" stroke-width="0.12">10° 56' 43,1989" S</text>
<text x="434.2" y="630.3" font-size="5.7" fill="#111" stroke="#111" stroke-width="0.12">0.99972736</text>
<text x="74.0" y="642.9" font-size="5.7" fill="#111" stroke="#111" stroke-width="0.12">V07</text>
<text x="102.2" y="642.9" font-size="5.7" fill="#111" stroke="#111" stroke-width="0.12">V07-V08</text>
<text x="133.8" y="642.9" font-size="5.7" fill="#111" stroke="#111" stroke-width="0.12">601822.0231</text>
<text x="178.0" y="642.9" font-size="5.7" fill="#111" stroke="#111" stroke-width="0.12">8789815.7843</text>
<text x="225.3" y="642.9" font-size="5.7" fill="#111" stroke="#111" stroke-width="0.12">216° 27' 44,522"</text>
<text x="282.2" y="642.9" font-size="5.7" fill="#111" stroke="#111" stroke-width="0.12">74.957</text>
<text x="317.1" y="642.9" font-size="5.7" fill="#111" stroke="#111" stroke-width="0.12">62° 4' 05,3226" W</text>
<text x="375.0" y="642.9" font-size="5.7" fill="#111" stroke="#111" stroke-width="0.12">10° 56' 46,1971" S</text>
<text x="434.2" y="642.9" font-size="5.7" fill="#111" stroke="#111" stroke-width="0.12">0.99972738</text>
<text x="74.0" y="655.5" font-size="5.7" fill="#111" stroke="#111" stroke-width="0.12">V08</text>
<text x="102.2" y="655.5" font-size="5.7" fill="#111" stroke="#111" stroke-width="0.12">V08-V09</text>
<text x="133.8" y="655.5" font-size="5.7" fill="#111" stroke="#111" stroke-width="0.12">601777.4350</text>
<text x="178.0" y="655.5" font-size="5.7" fill="#111" stroke="#111" stroke-width="0.12">8789755.8325</text>
<text x="225.3" y="655.5" font-size="5.7" fill="#111" stroke="#111" stroke-width="0.12">192° 42' 32,9214"</text>
<text x="282.2" y="655.5" font-size="5.7" fill="#111" stroke="#111" stroke-width="0.12">93.269</text>
<text x="317.1" y="655.5" font-size="5.7" fill="#111" stroke="#111" stroke-width="0.12">62° 4' 06,7654" W</text>
<text x="375.0" y="655.5" font-size="5.7" fill="#111" stroke="#111" stroke-width="0.12">10° 56' 48,1532" S</text>
<text x="434.2" y="655.5" font-size="5.7" fill="#111" stroke="#111" stroke-width="0.12">0.99972727</text>
<text x="74.0" y="668.1" font-size="5.7" fill="#111" stroke="#111" stroke-width="0.12">V09</text>
<text x="102.2" y="668.1" font-size="5.7" fill="#111" stroke="#111" stroke-width="0.12">V09-V10</text>
<text x="133.8" y="668.1" font-size="5.7" fill="#111" stroke="#111" stroke-width="0.12">601756.7427</text>
<text x="178.0" y="668.1" font-size="5.7" fill="#111" stroke="#111" stroke-width="0.12">8789665.3838</text>
<text x="225.3" y="668.1" font-size="5.7" fill="#111" stroke="#111" stroke-width="0.12">135° 14' 34,6377"</text>
<text x="282.2" y="668.1" font-size="5.7" fill="#111" stroke="#111" stroke-width="0.12">58.005</text>
<text x="317.1" y="668.1" font-size="5.7" fill="#111" stroke="#111" stroke-width="0.12">62° 4' 07,4579" W</text>
<text x="375.0" y="668.1" font-size="5.7" fill="#111" stroke="#111" stroke-width="0.12">10° 56' 51,0988" S</text>
<text x="434.2" y="668.1" font-size="5.7" fill="#111" stroke="#111" stroke-width="0.12">0.99972721</text>
<text x="74.0" y="680.7" font-size="5.7" fill="#111" stroke="#111" stroke-width="0.12">V10</text>
<text x="102.2" y="680.7" font-size="5.7" fill="#111" stroke="#111" stroke-width="0.12">V10-V11</text>
<text x="133.8" y="680.7" font-size="5.7" fill="#111" stroke="#111" stroke-width="0.12">601797.3629</text>
<text x="178.0" y="680.7" font-size="5.7" fill="#111" stroke="#111" stroke-width="0.12">8789624.1640</text>
<text x="225.3" y="680.7" font-size="5.7" fill="#111" stroke="#111" stroke-width="0.12">76° 42' 14,2038"</text>
<text x="282.2" y="680.7" font-size="5.7" fill="#111" stroke="#111" stroke-width="0.12">61.59</text>
<text x="317.1" y="680.7" font-size="5.7" fill="#111" stroke="#111" stroke-width="0.12">62° 4' 06,1155" W</text>
<text x="375.0" y="680.7" font-size="5.7" fill="#111" stroke="#111" stroke-width="0.12">10° 56' 52,4376" S</text>
<text x="434.2" y="680.7" font-size="5.7" fill="#111" stroke="#111" stroke-width="0.12">0.99972732</text>
<text x="74.0" y="693.3" font-size="5.7" fill="#111" stroke="#111" stroke-width="0.12">V11</text>
<text x="102.2" y="693.3" font-size="5.7" fill="#111" stroke="#111" stroke-width="0.12">V11-V12</text>
<text x="133.8" y="693.3" font-size="5.7" fill="#111" stroke="#111" stroke-width="0.12">601857.3831</text>
<text x="178.0" y="693.3" font-size="5.7" fill="#111" stroke="#111" stroke-width="0.12">8789638.1522</text>
<text x="225.3" y="693.3" font-size="5.7" fill="#111" stroke="#111" stroke-width="0.12">86° 41' 32,1995"</text>
<text x="282.2" y="693.3" font-size="5.7" fill="#111" stroke="#111" stroke-width="0.12">34.966</text>
<text x="317.1" y="693.3" font-size="5.7" fill="#111" stroke="#111" stroke-width="0.12">62° 4' 04,1397" W</text>
<text x="375.0" y="693.3" font-size="5.7" fill="#111" stroke="#111" stroke-width="0.12">10° 56' 51,9762" S</text>
<text x="434.2" y="693.3" font-size="5.7" fill="#111" stroke="#111" stroke-width="0.12">0.99972747</text>
<text x="74.0" y="705.9" font-size="5.7" fill="#111" stroke="#111" stroke-width="0.12">V12</text>
<text x="102.2" y="705.9" font-size="5.7" fill="#111" stroke="#111" stroke-width="0.12">V12-V13</text>
<text x="133.8" y="705.9" font-size="5.7" fill="#111" stroke="#111" stroke-width="0.12">601892.3827</text>
<text x="178.0" y="705.9" font-size="5.7" fill="#111" stroke="#111" stroke-width="0.12">8789638.2320</text>
<text x="225.3" y="705.9" font-size="5.7" fill="#111" stroke="#111" stroke-width="0.12">137° 29' 59,2005"</text>
<text x="282.2" y="705.9" font-size="5.7" fill="#111" stroke="#111" stroke-width="0.12">112.57</text>
<text x="317.1" y="705.9" font-size="5.7" fill="#111" stroke="#111" stroke-width="0.12">62° 4' 02,9666" W</text>
<text x="375.0" y="705.9" font-size="5.7" fill="#111" stroke="#111" stroke-width="0.12">10° 56' 51,9701" S</text>
<text x="434.2" y="705.9" font-size="5.7" fill="#111" stroke="#111" stroke-width="0.12">0.99972755</text>
<text x="74.0" y="718.5" font-size="5.7" fill="#111" stroke="#111" stroke-width="0.12">V13</text>
<text x="102.2" y="718.5" font-size="5.7" fill="#111" stroke="#111" stroke-width="0.12">V13-V14</text>
<text x="133.8" y="718.5" font-size="5.7" fill="#111" stroke="#111" stroke-width="0.12">601967.9832</text>
<text x="178.0" y="718.5" font-size="5.7" fill="#111" stroke="#111" stroke-width="0.12">8789555.2155</text>
<text x="225.3" y="718.5" font-size="5.7" fill="#111" stroke="#111" stroke-width="0.12">111° 40' 50,6271"</text>
<text x="282.2" y="718.5" font-size="5.7" fill="#111" stroke="#111" stroke-width="0.12">175.301</text>
<text x="317.1" y="718.5" font-size="5.7" fill="#111" stroke="#111" stroke-width="0.12">62° 4' 00,4876" W</text>
<text x="375.0" y="718.5" font-size="5.7" fill="#111" stroke="#111" stroke-width="0.12">10° 56' 54,6650" S</text>
<text x="434.2" y="718.5" font-size="5.7" fill="#111" stroke="#111" stroke-width="0.12">0.99972774</text>
<text x="74.0" y="731.1" font-size="5.7" fill="#111" stroke="#111" stroke-width="0.12">V14</text>
<text x="102.2" y="731.1" font-size="5.7" fill="#111" stroke="#111" stroke-width="0.12">V14-V15</text>
<text x="133.8" y="731.1" font-size="5.7" fill="#111" stroke="#111" stroke-width="0.12">602130.6949</text>
<text x="178.0" y="731.1" font-size="5.7" fill="#111" stroke="#111" stroke-width="0.12">8789489.9444</text>
<text x="225.3" y="731.1" font-size="5.7" fill="#111" stroke="#111" stroke-width="0.12">138° 21' 56,3872"</text>
<text x="282.2" y="731.1" font-size="5.7" fill="#111" stroke="#111" stroke-width="0.12">59.107</text>
<text x="317.1" y="731.1" font-size="5.7" fill="#111" stroke="#111" stroke-width="0.12">62° 3' 55,1206" W</text>
<text x="375.0" y="731.1" font-size="5.7" fill="#111" stroke="#111" stroke-width="0.12">10° 56' 56,7734" S</text>
<text x="434.2" y="731.1" font-size="5.7" fill="#111" stroke="#111" stroke-width="0.12">0.99972815</text>
<text x="74.0" y="743.7" font-size="5.7" fill="#111" stroke="#111" stroke-width="0.12">V15</text>
<text x="102.2" y="743.7" font-size="5.7" fill="#111" stroke="#111" stroke-width="0.12">V15-V16</text>
<text x="133.8" y="743.7" font-size="5.7" fill="#111" stroke="#111" stroke-width="0.12">602169.7228</text>
<text x="178.0" y="743.7" font-size="5.7" fill="#111" stroke="#111" stroke-width="0.12">8789445.7642</text>
<text x="225.3" y="743.7" font-size="5.7" fill="#111" stroke="#111" stroke-width="0.12">206° 9' 27,6076"</text>
<text x="282.2" y="743.7" font-size="5.7" fill="#111" stroke="#111" stroke-width="0.12">124.508</text>
<text x="317.1" y="743.7" font-size="5.7" fill="#111" stroke="#111" stroke-width="0.12">62° 3' 53,8304" W</text>
<text x="375.0" y="743.7" font-size="5.7" fill="#111" stroke="#111" stroke-width="0.12">10° 56' 58,2077" S</text>
<text x="434.2" y="743.7" font-size="5.7" fill="#111" stroke="#111" stroke-width="0.12">0.99972825</text>
<text x="74.0" y="756.3" font-size="5.7" fill="#111" stroke="#111" stroke-width="0.12">V16</text>
<text x="102.2" y="756.3" font-size="5.7" fill="#111" stroke="#111" stroke-width="0.12">V16-V17</text>
<text x="133.8" y="756.3" font-size="5.7" fill="#111" stroke="#111" stroke-width="0.12">602114.7226</text>
<text x="178.0" y="756.3" font-size="5.7" fill="#111" stroke="#111" stroke-width="0.12">8789334.6519</text>
<text x="225.3" y="756.3" font-size="5.7" fill="#111" stroke="#111" stroke-width="0.12">212° 30' 11,1436"</text>
<text x="282.2" y="756.3" font-size="5.7" fill="#111" stroke="#111" stroke-width="0.12">169.905</text>
<text x="317.1" y="756.3" font-size="5.7" fill="#111" stroke="#111" stroke-width="0.12">62° 3' 55,6310" W</text>
<text x="375.0" y="756.3" font-size="5.7" fill="#111" stroke="#111" stroke-width="0.12">10° 57' 01,8303" S</text>
<text x="434.2" y="756.3" font-size="5.7" fill="#111" stroke="#111" stroke-width="0.12">0.99972811</text>
<text x="74.0" y="768.9" font-size="5.7" fill="#111" stroke="#111" stroke-width="0.12">V17</text>
<text x="102.2" y="768.9" font-size="5.7" fill="#111" stroke="#111" stroke-width="0.12">V17-V18</text>
<text x="133.8" y="768.9" font-size="5.7" fill="#111" stroke="#111" stroke-width="0.12">602023.3152</text>
<text x="178.0" y="768.9" font-size="5.7" fill="#111" stroke="#111" stroke-width="0.12">8789192.1644</text>
<text x="225.3" y="768.9" font-size="5.7" fill="#111" stroke="#111" stroke-width="0.12">149° 9' 0,4192"</text>
<text x="282.2" y="768.9" font-size="5.7" fill="#111" stroke="#111" stroke-width="0.12">114.446</text>
<text x="317.1" y="768.9" font-size="5.7" fill="#111" stroke="#111" stroke-width="0.12">62° 3' 58,6278" W</text>
<text x="375.0" y="768.9" font-size="5.7" fill="#111" stroke="#111" stroke-width="0.12">10° 57' 06,4782" S</text>
<text x="434.2" y="768.9" font-size="5.7" fill="#111" stroke="#111" stroke-width="0.12">0.99972788</text>
<text x="74.0" y="781.5" font-size="5.7" fill="#111" stroke="#111" stroke-width="0.12">V18</text>
<text x="102.2" y="781.5" font-size="5.7" fill="#111" stroke="#111" stroke-width="0.12">V18-V19</text>
<text x="133.8" y="781.5" font-size="5.7" fill="#111" stroke="#111" stroke-width="0.12">602081.4752</text>
<text x="178.0" y="781.5" font-size="5.7" fill="#111" stroke="#111" stroke-width="0.12">8789094.1045</text>
<text x="225.3" y="781.5" font-size="5.7" fill="#111" stroke="#111" stroke-width="0.12">262° 19' 5,4738"</text>
<text x="282.2" y="781.5" font-size="5.7" fill="#111" stroke="#111" stroke-width="0.12">725.481</text>
<text x="317.1" y="781.5" font-size="5.7" fill="#111" stroke="#111" stroke-width="0.12">62° 3' 56,7017" W</text>
<text x="375.0" y="781.5" font-size="5.7" fill="#111" stroke="#111" stroke-width="0.12">10° 57' 09,6646" S</text>
<text x="434.2" y="781.5" font-size="5.7" fill="#111" stroke="#111" stroke-width="0.12">0.99972803</text>
<text x="74.0" y="794.1" font-size="5.7" fill="#111" stroke="#111" stroke-width="0.12">V19</text>
<text x="102.2" y="794.1" font-size="5.7" fill="#111" stroke="#111" stroke-width="0.12">V19-V00</text>
<text x="133.8" y="794.1" font-size="5.7" fill="#111" stroke="#111" stroke-width="0.12">601361.5950</text>
<text x="178.0" y="794.1" font-size="5.7" fill="#111" stroke="#111" stroke-width="0.12">8788999.2757</text>
<text x="225.3" y="794.1" font-size="5.7" fill="#111" stroke="#111" stroke-width="0.12">0° 42' 58,3556"</text>
<text x="282.2" y="794.1" font-size="5.7" fill="#111" stroke="#111" stroke-width="0.12">1728.819</text>
<text x="317.1" y="794.1" font-size="5.7" fill="#111" stroke="#111" stroke-width="0.12">62° 4' 20,4060" W</text>
<text x="375.0" y="794.1" font-size="5.7" fill="#111" stroke="#111" stroke-width="0.12">10° 57' 12,8241" S</text>
<text x="434.2" y="794.1" font-size="5.7" fill="#111" stroke="#111" stroke-width="0.12">0.99972623</text>
<text x="271.9" y="806.6" font-size="5.6" font-weight="bold" text-anchor="middle" fill="#111">Perímetro: 4906.33 m | Área: 900299.74 m² / 90.0300 ha</text>
</g>
<line x1="53" y1="19.5" x2="977" y2="19.5" stroke="#555" stroke-width="1"/>
<line x1="53.5" y1="19" x2="53.5" y2="858" stroke="#555" stroke-width="1"/>
<line x1="976.5" y1="19" x2="976.5" y2="858" stroke="#555" stroke-width="1"/>
<line x1="53" y1="857.5" x2="977" y2="857.5" stroke="#858585" stroke-width="1"/>
<text x="199.2" y="17.6" font-size="7.9" textLength="52.0" lengthAdjust="spacingAndGlyphs" text-anchor="middle" fill="#111" stroke="#111" stroke-width="0.2">-6910500.000</text>
<text x="199.2" y="865.6" font-size="7.9" textLength="52.0" lengthAdjust="spacingAndGlyphs" text-anchor="middle" fill="#111" stroke="#111" stroke-width="0.2">-6910500.000</text>
<text x="426.7" y="17.6" font-size="7.9" textLength="52.0" lengthAdjust="spacingAndGlyphs" text-anchor="middle" fill="#111" stroke="#111" stroke-width="0.2">-6909990.000</text>
<text x="426.7" y="865.6" font-size="7.9" textLength="52.0" lengthAdjust="spacingAndGlyphs" text-anchor="middle" fill="#111" stroke="#111" stroke-width="0.2">-6909990.000</text>
<text x="654.4" y="17.6" font-size="7.9" textLength="52.0" lengthAdjust="spacingAndGlyphs" text-anchor="middle" fill="#111" stroke="#111" stroke-width="0.2">-6909480.000</text>
<text x="654.4" y="865.6" font-size="7.9" textLength="52.0" lengthAdjust="spacingAndGlyphs" text-anchor="middle" fill="#111" stroke="#111" stroke-width="0.2">-6909480.000</text>
<text x="881.4" y="17.6" font-size="7.9" textLength="52.0" lengthAdjust="spacingAndGlyphs" text-anchor="middle" fill="#111" stroke="#111" stroke-width="0.2">-6908970.000</text>
<text x="881.4" y="865.6" font-size="7.9" textLength="52.0" lengthAdjust="spacingAndGlyphs" text-anchor="middle" fill="#111" stroke="#111" stroke-width="0.2">-6908970.000</text>
<g transform="translate(48.1,245.2) rotate(-90)">
<text x="0.0" y="2.8" font-size="7.9" textLength="50.0" lengthAdjust="spacingAndGlyphs" text-anchor="middle" fill="#111" stroke="#111" stroke-width="0.2">-1225530.000</text>
</g>
<g transform="translate(981.1,245.2) rotate(-90)">
<text x="0.0" y="2.8" font-size="7.9" textLength="50.0" lengthAdjust="spacingAndGlyphs" text-anchor="middle" fill="#111" stroke="#111" stroke-width="0.2">-1225530.000</text>
</g>
<g transform="translate(48.1,472.3) rotate(-90)">
<text x="0.0" y="2.8" font-size="7.9" textLength="50.0" lengthAdjust="spacingAndGlyphs" text-anchor="middle" fill="#111" stroke="#111" stroke-width="0.2">-1226040.000</text>
</g>
<g transform="translate(981.1,472.3) rotate(-90)">
<text x="0.0" y="2.8" font-size="7.9" textLength="50.0" lengthAdjust="spacingAndGlyphs" text-anchor="middle" fill="#111" stroke="#111" stroke-width="0.2">-1226040.000</text>
</g>
<g transform="translate(48.1,699.2) rotate(-90)">
<text x="0.0" y="2.8" font-size="7.9" textLength="50.0" lengthAdjust="spacingAndGlyphs" text-anchor="middle" fill="#111" stroke="#111" stroke-width="0.2">-1226550.000</text>
</g>
<g transform="translate(981.1,699.2) rotate(-90)">
<text x="0.0" y="2.8" font-size="7.9" textLength="50.0" lengthAdjust="spacingAndGlyphs" text-anchor="middle" fill="#111" stroke="#111" stroke-width="0.2">-1226550.000</text>
</g>
<rect x="42.5" y="8.5" width="945.0" height="860.0" stroke="#3b8ccc" fill="none" stroke-width="1"/>
<rect x="42.5" y="8.5" width="10.0" height="10.0" stroke="#3b8ccc" fill="#fff" stroke-width="1"/>
<rect x="510.5" y="8.5" width="10.0" height="10.0" stroke="#3b8ccc" fill="#fff" stroke-width="1"/>
<rect x="977.5" y="8.5" width="10.0" height="10.0" stroke="#3b8ccc" fill="#fff" stroke-width="1"/>
<rect x="42.5" y="858.5" width="10.0" height="10.0" stroke="#3b8ccc" fill="#fff" stroke-width="1"/>
<rect x="510.5" y="858.5" width="10.0" height="10.0" stroke="#3b8ccc" fill="#fff" stroke-width="1"/>
<rect x="977.5" y="858.5" width="10.0" height="10.0" stroke="#3b8ccc" fill="#fff" stroke-width="1"/>
<rect x="42.5" y="433.5" width="10.0" height="10.0" stroke="#3b8ccc" fill="#fff" stroke-width="1"/>
<rect x="977.5" y="433.5" width="10.0" height="10.0" stroke="#3b8ccc" fill="#fff" stroke-width="1"/>
<line x1="991" y1="8.5" x2="1253" y2="8.5" stroke="#555" stroke-width="1"/>
<line x1="991.5" y1="8" x2="991.5" y2="869" stroke="#a8a8a8" stroke-width="1"/>
<line x1="1252.5" y1="8" x2="1252.5" y2="869" stroke="#666" stroke-width="1"/>
<line x1="991" y1="868.5" x2="1253" y2="868.5" stroke="#8c8c8c" stroke-width="1"/>
<rect x="995.5" y="12.5" width="252.0" height="107.0" stroke="#5e5e5e" fill="#fff" stroke-width="1"/>
<rect x="995.5" y="124.5" width="252.0" height="88.0" stroke="#5e5e5e" fill="#fff" stroke-width="1"/>
<rect x="995.5" y="216.5" width="252.0" height="221.0" stroke="#5e5e5e" fill="#fff" stroke-width="1"/>
<rect x="995.5" y="443.5" width="252.0" height="51.39999999999998" stroke="#5e5e5e" fill="#fff" stroke-width="1"/>
<rect x="995.5" y="500.5" width="252.0" height="121.0" stroke="#5e5e5e" fill="#fff" stroke-width="1"/>
<rect x="995.5" y="625.5" width="252.0" height="113.0" stroke="#5e5e5e" fill="#fff" stroke-width="1"/>
<rect x="995.5" y="743.5" width="252.0" height="121.0" stroke="#5e5e5e" fill="#fff" stroke-width="1"/>
<text x="1069.5" y="131.7" font-size="4.6" textLength="39.0" lengthAdjust="spacingAndGlyphs" text-anchor="middle" fill="#222">CONVENÇÕES</text>
<rect x="1006.5" y="141.0" width="6.0" height="5.5" stroke="#555" fill="#fff" stroke-width="0.8"/>
<text x="1015.2" y="146.0" font-size="5.8" textLength="52.8" lengthAdjust="spacingAndGlyphs" fill="#333">Propriedade xpto</text>
<line x1="1006" y1="153.3" x2="1012.6" y2="153.3" stroke="#c8c8c8" stroke-width="1"/>
<text x="1015.2" y="156.2" font-size="5.8" textLength="48.5" lengthAdjust="spacingAndGlyphs" fill="#333">Curvas de Nível</text>
<text x="1006.5" y="169.1" font-size="8.8" textLength="77.0" lengthAdjust="spacingAndGlyphs" fill="#111" stroke="#111" stroke-width="0.2">Vértices Ordenados</text>
<line x1="1006" y1="176.2" x2="1012.6" y2="176.2" stroke="#4a78c8" stroke-width="1.1"/>
<text x="1015.2" y="178.9" font-size="5.8" textLength="30.4" lengthAdjust="spacingAndGlyphs" fill="#333">Rio Urupá</text>
<rect x="1007" y="183" width="5.5" height="5.5" stroke="#666" fill="url(#lhatch)" stroke-width="0.7"/>
<text x="1015.2" y="187.8" font-size="5.8" textLength="53.2" lengthAdjust="spacingAndGlyphs" fill="#333">Área consolidada</text>
<rect x="1006.5" y="192.8" width="6.0" height="5.799999999999983" stroke="#3d6b35" fill="#cfe8c9" stroke-width="1"/>
<text x="1015.2" y="198.1" font-size="5.8" textLength="44.8" lengthAdjust="spacingAndGlyphs" fill="#333">Reserva Legal</text>
<rect x="1004.5" y="202" width="136.29999999999995" height="11.599999999999994" stroke="none" fill="#fff" stroke-width="1"/>
<text x="1006.8" y="211.3" font-size="8.8" textLength="133.5" lengthAdjust="spacingAndGlyphs" fill="#111" stroke="#111" stroke-width="0.2">Área de Preservação Permanente</text>
<text x="1192.5" y="130.5" font-size="4.6" textLength="36.3" lengthAdjust="spacingAndGlyphs" text-anchor="middle" fill="#222">ORIENTAÇÃO</text>
<text x="1208.0" y="142.7" font-size="3.4" textLength="58.0" lengthAdjust="spacingAndGlyphs" text-anchor="middle" fill="#333">SISTEMA DE REFERÊNCIAS DE</text>
<text x="1208.0" y="148.7" font-size="3.4" textLength="56.0" lengthAdjust="spacingAndGlyphs" text-anchor="middle" fill="#333">COORDENADAS PROJETADO</text>
<text x="1208.0" y="166.7" font-size="3.4" textLength="62.0" lengthAdjust="spacingAndGlyphs" text-anchor="middle" fill="#333">DATUM SIRGAS 2000 UTM ZONE</text>
<text x="1208.0" y="172.7" font-size="3.4" textLength="50.0" lengthAdjust="spacingAndGlyphs" text-anchor="middle" fill="#333">(INSERIR SUA UTM) EPSG:</text>
<text x="1208.0" y="178.7" font-size="3.4" textLength="30.0" lengthAdjust="spacingAndGlyphs" text-anchor="middle" fill="#333">(INSERIR EPSG)</text>
<text x="1206.0" y="193.2" font-size="7.2" textLength="24.5" lengthAdjust="spacingAndGlyphs" text-anchor="middle" fill="#111">1:5.000</text>
<line x1="1159.4" y1="139" x2="1159.4" y2="187" stroke="#111" stroke-width="1.1"/>
<line x1="1159.4" y1="187" x2="1145.8" y2="148" stroke="#222" stroke-width="0.9"/>
<line x1="1145.8" y1="147.5" x2="1159.4" y2="143.6" stroke="#777" stroke-width="0.6"/>
<path d="M1159.4,132.6 L1160.3,135.2 L1163,135.2 L1160.8,136.8 L1161.6,139.4 L1159.4,137.8 L1157.2,139.4 L1158,136.8 L1155.8,135.2 L1158.5,135.2 Z" fill="#111"/>
<rect x="1170.3" y="198.1" width="68.8" height="4.5" rx="1.5" fill="#111"/>
<rect x="1193.3" y="198.9" width="22.90000000000009" height="1.0999999999999943" stroke="none" fill="#ddd" stroke-width="1"/>
<rect x="1171" y="200.4" width="22.299999999999955" height="1.5999999999999943" stroke="none" fill="#999" stroke-width="1"/>
<rect x="1216.2" y="200.4" width="22.299999999999955" height="1.5999999999999943" stroke="none" fill="#999" stroke-width="1"/>
<text x="1182.3" y="209.7" font-size="4.6" textLength="6.5" lengthAdjust="spacingAndGlyphs" text-anchor="middle" fill="#333">50</text>
<text x="1204.8" y="209.7" font-size="4.6" textLength="6.5" lengthAdjust="spacingAndGlyphs" text-anchor="middle" fill="#333">50</text>
<text x="1229.8" y="209.7" font-size="4.6" textLength="14.5" lengthAdjust="spacingAndGlyphs" text-anchor="middle" fill="#333">100 m</text>
<text x="1121.5" y="225.4" font-size="7.4" textLength="104.0" lengthAdjust="spacingAndGlyphs" text-anchor="middle" fill="#111" stroke="#111" stroke-width="0.15">CROQUI DE LOCALIZAÇÃO</text>
<g clip-path="url(#satclip)">
<g transform="translate(995,228) scale(0.23602)">
<rect x="-20" y="-20" width="1120" height="940" fill="#466f56"/>
<g filter="url(#blur2)">
<path d="M0.0,0.0 L400.0,0.0 L400.0,440.0 L290.0,440.0 L0.0,450.0 Z" fill="#4b7a5e"/>
<path d="M0.0,450.0 L290.0,440.0 L240.0,600.0 L0.0,720.0 Z" fill="#4f7f62"/>
<path d="M0.0,720.0 L180.0,720.0 L180.0,900.0 L0.0,900.0 Z" fill="#3f6e52"/>
<path d="M0.0,745.0 L100.0,745.0 L100.0,820.0 L0.0,820.0 Z" fill="#2a5040"/>
<path d="M400.0,0.0 L560.0,0.0 L560.0,300.0 L400.0,300.0 Z" fill="#4a8046"/>
<path d="M560.0,0.0 L720.0,0.0 L720.0,300.0 L560.0,300.0 Z" fill="#3f7050"/>
<path d="M590.0,10.0 L720.0,10.0 L720.0,160.0 L650.0,160.0 L590.0,100.0 Z" fill="#4f8a78"/>
<path d="M650.0,0.0 L720.0,0.0 L720.0,85.0 L650.0,85.0 Z" fill="#1f3a3a"/>
<path d="M550.0,15.0 L590.0,15.0 L590.0,125.0 L550.0,125.0 Z" fill="#1f3f35"/>
<path d="M715.0,30.0 L745.0,30.0 L745.0,250.0 L715.0,250.0 Z" fill="#1a3530"/>
<path d="M560.0,185.0 L665.0,185.0 L665.0,255.0 L560.0,255.0 Z" fill="#6a806a"/>
<path d="M650.0,190.0 L720.0,190.0 L720.0,250.0 L650.0,250.0 Z" fill="#2a4550"/>
<path d="M720.0,150.0 L940.0,150.0 L1080.0,260.0 L1080.0,540.0 L720.0,540.0 Z" fill="#4b7a4c"/>
<path d="M530.0,275.0 L930.0,275.0 L930.0,445.0 L530.0,445.0 Z" fill="#4f7d4f"/>
<path d="M930.0,0.0 L1080.0,0.0 L1080.0,180.0 L935.0,150.0 Z" fill="#213f33"/>
<path d="M930.0,190.0 L1080.0,190.0 L1080.0,350.0 L930.0,350.0 Z" fill="#24503a"/>
<path d="M420.0,30.0 L530.0,30.0 L530.0,130.0 L420.0,130.0 Z" fill="#5a9650"/>
<path d="M420.0,150.0 L530.0,150.0 L530.0,250.0 L420.0,250.0 Z" fill="#579150"/>
<path d="M80.0,235.0 L130.0,235.0 L130.0,310.0 L80.0,310.0 Z" fill="#1d4033"/>
<path d="M315.0,0.0 L370.0,0.0 L360.0,105.0 L320.0,100.0 Z" fill="#1c3a34"/>
<path d="M290.0,440.0 L500.0,440.0 L500.0,555.0 L360.0,555.0 L290.0,500.0 Z" fill="#1b3e3a"/>
<path d="M355.0,550.0 L500.0,550.0 L500.0,595.0 L355.0,595.0 Z" fill="#5a8a6a"/>
<path d="M505.0,320.0 L580.0,300.0 L610.0,540.0 L505.0,540.0 Z" fill="#74908a"/>
<path d="M500.0,530.0 L800.0,520.0 L1000.0,580.0 L1030.0,620.0 L1000.0,890.0 L480.0,890.0 L470.0,600.0 Z" fill="#1e3f2c"/>
<path d="M185.0,640.0 L480.0,640.0 L480.0,835.0 L240.0,835.0 L185.0,760.0 Z" fill="#1f4538"/>
<path d="M240.0,585.0 L490.0,585.0 L490.0,650.0 L240.0,650.0 Z" fill="#6a806a"/>
<path d="M560.0,740.0 L760.0,740.0 L780.0,830.0 L560.0,830.0 Z" fill="#6a8a58"/>
<path d="M940.0,650.0 L1080.0,650.0 L1080.0,900.0 L940.0,900.0 Z" fill="#45755a"/>
<path d="M540.0,600.0 L680.0,600.0 L680.0,720.0 L540.0,720.0 Z" fill="#376052"/>
<path d="M0.0,160.0 L180.0,160.0 L180.0,260.0 L0.0,280.0 Z" fill="#588a5c"/>
<path d="M140.0,380.0 L270.0,380.0 L270.0,520.0 L140.0,520.0 Z" fill="#578a5c"/>
<path d="M780.0,300.0 L930.0,300.0 L930.0,430.0 L780.0,430.0 Z" fill="#62895a"/>
<path d="M925.0,60.0 L1010.0,60.0 L1010.0,210.0 L925.0,210.0 Z" fill="#6a7a48"/>
<path d="M0.0,180.0 L50.0,180.0 L50.0,260.0 L0.0,260.0 Z" fill="#2d5a45"/>
<path d="M200.0,150.0 L300.0,150.0 L300.0,260.0 L200.0,260.0 Z" fill="#5b8a60"/>
<path d="M410.0,705.0 L540.0,705.0 L540.0,900.0 L410.0,900.0 Z" fill="#284d3e"/>
<path d="M350.0,820.0 L400.0,820.0 L400.0,900.0 L350.0,900.0 Z" fill="#6a8a7a"/>
<path d="M640.0,680.0 L720.0,680.0 L720.0,740.0 L640.0,740.0 Z" fill="#24483a"/>
<path d="M500.0,280.0 L540.0,280.0 L540.0,445.0 L500.0,445.0 Z" fill="#2a4a3e"/>
</g>
<path d="M330.0,20.0 C323.3,33.3 300.8,71.7 290.0,100.0 C279.2,128.3 273.3,172.5 265.0,190.0 C256.7,207.5 244.2,202.5 240.0,205.0" fill="none" stroke="#22423a" stroke-width="9" opacity="0.55"/>
<path d="M130.0,280.0 C141.7,283.3 175.0,291.7 200.0,300.0 C225.0,308.3 261.7,321.7 280.0,330.0 C298.3,338.3 305.0,346.7 310.0,350.0" fill="none" stroke="#22423a" stroke-width="9" opacity="0.55"/>
<path d="M200.0,600.0 C230.0,606.7 320.0,628.3 380.0,640.0 C440.0,651.7 530.0,665.0 560.0,670.0" fill="none" stroke="#22423a" stroke-width="9" opacity="0.55"/>
<path d="M800.0,0.0 C805.0,10.0 820.0,26.7 830.0,60.0 C840.0,93.3 855.0,176.7 860.0,200.0" fill="none" stroke="#22423a" stroke-width="9" opacity="0.55"/>
<path d="M0.0,420.0 C10.0,428.3 38.3,453.3 60.0,470.0 C81.7,486.7 118.3,511.7 130.0,520.0" fill="none" stroke="#22423a" stroke-width="9" opacity="0.55"/>
<path d="M347,134h4v4h-4zM78,477h6v6h-6zM625,810h5v5h-5zM40,386h4v4h-4zM258,490h4v4h-4zM886,110h5v5h-5zM676,519h4v4h-4zM619,353h5v5h-5zM50,764h6v6h-6zM449,481h6v6h-6zM601,607h4v4h-4zM623,569h6v6h-6zM104,634h4v4h-4zM664,442h8v8h-8zM833,414h8v8h-8zM388,221h5v5h-5zM749,217h6v6h-6zM563,779h8v8h-8zM309,872h4v4h-4zM549,147h6v6h-6zM163,435h4v4h-4zM1031,69h6v6h-6zM365,312h8v8h-8zM622,406h4v4h-4zM1013,422h4v4h-4zM65,624h8v8h-8zM305,343h6v6h-6zM24,411h5v5h-5zM655,439h5v5h-5zM824,115h5v5h-5zM427,816h8v8h-8zM86,400h6v6h-6zM947,729h6v6h-6zM757,878h8v8h-8zM1027,134h5v5h-5zM162,586h4v4h-4zM520,524h6v6h-6zM302,130h6v6h-6zM654,284h5v5h-5zM740,459h4v4h-4zM490,775h8v8h-8zM427,351h8v8h-8zM680,55h4v4h-4zM1056,392h4v4h-4zM365,47h4v4h-4zM608,478h6v6h-6zM658,63h5v5h-5zM658,132h6v6h-6zM1024,536h8v8h-8zM132,756h8v8h-8zM515,278h5v5h-5zM110,305h6v6h-6zM513,616h4v4h-4zM220,847h6v6h-6zM157,483h4v4h-4zM813,265h4v4h-4zM746,232h6v6h-6zM974,317h5v5h-5zM571,693h6v6h-6zM682,546h5v5h-5zM864,728h5v5h-5zM214,439h4v4h-4zM1061,703h8v8h-8zM278,616h6v6h-6zM479,834h6v6h-6zM1024,325h5v5h-5zM110,418h6v6h-6zM219,555h4v4h-4zM514,581h4v4h-4zM895,107h8v8h-8zM839,668h8v8h-8zM953,386h6v6h-6zM93,842h8v8h-8zM497,662h4v4h-4zM777,151h5v5h-5zM30,526h8v8h-8zM865,130h8v8h-8zM705,312h5v5h-5zM23,711h4v4h-4zM564,831h8v8h-8zM1058,173h5v5h-5zM30,189h5v5h-5zM819,290h8v8h-8zM894,54h6v6h-6zM962,590h8v8h-8zM887,782h5v5h-5zM570,466h4v4h-4zM936,691h4v4h-4zM832,133h5v5h-5zM508,645h4v4h-4zM349,461h8v8h-8zM841,94h4v4h-4zM266,246h4v4h-4zM544,500h4v4h-4zM475,545h5v5h-5zM743,403h8v8h-8zM544,220h6v6h-6zM989,795h5v5h-5zM900,122h4v4h-4zM421,281h5v5h-5zM459,189h6v6h-6zM840,798h5v5h-5zM1007,573h6v6h-6zM153,786h8v8h-8zM235,848h8v8h-8zM949,145h5v5h-5zM173,384h8v8h-8zM364,174h6v6h-6zM99,326h6v6h-6zM594,392h4v4h-4zM412,461h6v6h-6zM549,57h5v5h-5zM1042,93h6v6h-6zM291,806h5v5h-5zM290,115h8v8h-8zM911,602h6v6h-6zM435,478h8v8h-8zM751,80h4v4h-4zM857,163h4v4h-4zM288,15h4v4h-4zM859,75h5v5h-5zM71,768h8v8h-8zM12,885h8v8h-8zM993,238h5v5h-5zM46,631h4v4h-4zM1039,233h5v5h-5zM216,278h6v6h-6zM569,183h8v8h-8zM536,158h6v6h-6zM862,885h4v4h-4zM16,652h5v5h-5zM551,219h8v8h-8zM114,729h8v8h-8zM704,486h8v8h-8zM1040,274h5v5h-5zM1053,305h5v5h-5zM434,309h4v4h-4zM897,13h6v6h-6zM462,49h8v8h-8zM933,597h6v6h-6zM642,616h4v4h-4zM493,140h8v8h-8zM4,324h6v6h-6zM1043,487h5v5h-5zM37,785h5v5h-5zM382,1h8v8h-8zM90,248h5v5h-5zM266,691h4v4h-4zM283,80h8v8h-8zM629,351h6v6h-6zM326,207h5v5h-5zM705,637h8v8h-8zM819,641h8v8h-8zM160,644h5v5h-5zM47,743h8v8h-8zM787,723h5v5h-5zM975,670h4v4h-4zM886,520h5v5h-5zM91,37h6v6h-6zM1029,335h8v8h-8zM599,559h5v5h-5zM525,3h4v4h-4zM802,448h4v4h-4zM707,59h8v8h-8zM270,66h6v6h-6zM252,673h5v5h-5zM793,868h8v8h-8zM906,68h6v6h-6zM822,549h5v5h-5zM83,131h6v6h-6zM698,617h5v5h-5zM13,54h6v6h-6zM1043,89h5v5h-5zM724,259h6v6h-6zM498,415h4v4h-4zM1065,489h6v6h-6zM1049,833h4v4h-4zM310,68h8v8h-8zM1066,344h5v5h-5zM80,80h6v6h-6zM1021,118h6v6h-6zM951,626h5v5h-5zM534,780h8v8h-8zM27,3h8v8h-8zM731,361h5v5h-5zM446,335h4v4h-4zM901,2h6v6h-6zM900,107h5v5h-5zM764,802h6v6h-6zM271,58h8v8h-8zM1071,524h6v6h-6zM992,673h4v4h-4zM301,46h6v6h-6zM681,133h6v6h-6zM468,281h6v6h-6zM842,381h4v4h-4zM870,561h5v5h-5zM771,44h8v8h-8zM483,670h6v6h-6zM521,812h5v5h-5zM183,369h6v6h-6zM319,658h6v6h-6zM435,212h8v8h-8zM597,351h5v5h-5zM690,67h8v8h-8zM590,403h6v6h-6zM1068,400h5v5h-5zM587,217h5v5h-5zM367,81h5v5h-5zM395,720h5v5h-5zM951,667h8v8h-8zM410,664h5v5h-5zM404,301h4v4h-4zM534,511h6v6h-6zM135,448h5v5h-5zM99,798h8v8h-8zM429,397h6v6h-6zM910,777h4v4h-4zM136,378h8v8h-8zM1038,436h4v4h-4zM420,825h8v8h-8zM1042,221h4v4h-4zM240,135h4v4h-4zM1009,642h8v8h-8zM91,691h4v4h-4zM839,207h4v4h-4zM692,270h5v5h-5zM672,470h8v8h-8zM749,100h4v4h-4zM322,840h5v5h-5zM416,199h4v4h-4zM11,268h8v8h-8zM299,282h5v5h-5zM510,209h5v5h-5zM31,367h6v6h-6zM59,173h8v8h-8zM87,203h8v8h-8zM992,202h4v4h-4zM746,639h6v6h-6zM732,176h6v6h-6zM792,449h5v5h-5zM531,178h5v5h-5zM247,197h6v6h-6zM117,555h5v5h-5zM961,432h4v4h-4zM1017,130h8v8h-8zM58,21h5v5h-5zM445,632h5v5h-5zM422,799h6v6h-6zM785,888h5v5h-5zM353,165h8v8h-8zM34,591h8v8h-8zM900,877h8v8h-8zM181,3h6v6h-6zM87,374h4v4h-4zM602,675h8v8h-8zM382,731h8v8h-8zM94,628h5v5h-5zM400,818h5v5h-5zM347,656h8v8h-8zM32,366h8v8h-8zM44,31h4v4h-4zM861,55h5v5h-5zM801,800h6v6h-6zM389,298h4v4h-4zM281,638h6v6h-6zM991,265h4v4h-4zM26,208h8v8h-8zM767,415h8v8h-8zM847,813h8v8h-8zM142,442h4v4h-4zM860,657h5v5h-5zM651,292h6v6h-6zM494,698h4v4h-4zM549,349h5v5h-5zM265,58h4v4h-4zM516,485h5v5h-5zM1051,786h4v4h-4zM284,75h4v4h-4zM451,880h8v8h-8zM186,118h8v8h-8zM665,600h4v4h-4zM836,262h6v6h-6zM608,332h6v6h-6zM214,220h5v5h-5zM252,250h5v5h-5zM350,353h5v5h-5zM544,206h4v4h-4zM700,882h4v4h-4zM5,786h5v5h-5zM901,814h4v4h-4zM940,207h4v4h-4zM203,866h5v5h-5zM997,331h5v5h-5zM481,231h4v4h-4zM113,531h6v6h-6zM233,328h5v5h-5zM47,890h4v4h-4zM643,580h5v5h-5zM873,729h8v8h-8zM727,165h6v6h-6zM84,28h8v8h-8zM588,56h4v4h-4zM853,591h5v5h-5zM685,81h5v5h-5zM426,241h6v6h-6zM716,372h4v4h-4zM335,504h6v6h-6zM444,16h6v6h-6zM691,348h8v8h-8zM218,5h5v5h-5zM454,730h8v8h-8zM619,325h5v5h-5zM139,46h5v5h-5zM687,810h4v4h-4zM614,825h5v5h-5zM156,252h5v5h-5zM992,97h8v8h-8zM808,705h5v5h-5zM323,745h4v4h-4zM1046,430h4v4h-4zM651,566h4v4h-4zM969,552h5v5h-5zM686,762h8v8h-8zM659,175h8v8h-8zM196,194h8v8h-8zM1006,139h6v6h-6zM132,220h5v5h-5zM44,500h4v4h-4zM716,289h8v8h-8zM643,490h6v6h-6zM696,274h5v5h-5zM456,586h8v8h-8zM540,159h4v4h-4zM663,436h5v5h-5zM479,551h8v8h-8zM897,721h8v8h-8zM115,114h8v8h-8zM392,714h4v4h-4zM44,116h6v6h-6zM834,455h4v4h-4zM806,796h5v5h-5zM28,59h4v4h-4zM208,874h8v8h-8zM309,722h5v5h-5zM736,642h5v5h-5zM70,312h6v6h-6zM170,798h6v6h-6zM970,406h6v6h-6zM538,819h5v5h-5zM635,548h5v5h-5zM342,33h5v5h-5zM433,567h6v6h-6zM729,797h5v5h-5zM849,235h4v4h-4zM682,320h8v8h-8zM595,516h4v4h-4zM270,477h8v8h-8zM791,331h8v8h-8zM1062,514h6v6h-6zM355,72h5v5h-5zM189,662h4v4h-4zM318,459h6v6h-6zM685,876h6v6h-6zM786,665h5v5h-5zM160,548h8v8h-8zM448,324h4v4h-4zM142,202h4v4h-4zM24,2h6v6h-6zM326,466h5v5h-5zM443,268h5v5h-5zM219,555h8v8h-8zM170,13h5v5h-5zM758,401h4v4h-4zM684,775h6v6h-6zM431,235h4v4h-4zM60,731h6v6h-6zM638,515h8v8h-8zM266,804h4v4h-4zM66,22h5v5h-5zM255,52h4v4h-4zM13,490h5v5h-5zM153,178h8v8h-8zM872,155h6v6h-6zM68,557h8v8h-8zM767,6h8v8h-8zM799,414h8v8h-8zM188,887h6v6h-6zM249,35h6v6h-6zM955,823h6v6h-6zM763,237h8v8h-8zM735,816h6v6h-6zM317,826h5v5h-5zM92,452h5v5h-5zM279,210h5v5h-5zM1013,664h6v6h-6zM206,346h5v5h-5zM407,758h8v8h-8zM506,472h4v4h-4zM919,389h5v5h-5zM611,274h5v5h-5zM420,521h5v5h-5zM155,24h4v4h-4zM667,144h5v5h-5zM751,27h5v5h-5zM742,564h4v4h-4zM790,59h6v6h-6zM214,850h4v4h-4zM943,673h8v8h-8zM115,183h4v4h-4zM36,845h4v4h-4zM884,562h6v6h-6zM511,118h5v5h-5zM316,299h6v6h-6zM22,228h6v6h-6zM52,676h6v6h-6zM825,536h8v8h-8zM913,550h4v4h-4zM846,28h4v4h-4zM372,627h5v5h-5zM766,737h6v6h-6zM183,1h5v5h-5zM309,668h4v4h-4zM5,437h8v8h-8zM745,735h8v8h-8zM635,852h6v6h-6zM620,141h5v5h-5zM1006,206h5v5h-5zM118,567h4v4h-4zM526,882h4v4h-4zM673,316h8v8h-8zM995,794h4v4h-4zM453,575h6v6h-6zM221,234h5v5h-5zM407,787h5v5h-5zM1012,113h4v4h-4zM374,291h5v5h-5zM930,401h6v6h-6zM182,391h6v6h-6zM621,112h8v8h-8zM689,620h5v5h-5zM287,672h5v5h-5zM775,868h6v6h-6zM646,310h5v5h-5zM352,168h4v4h-4zM176,586h5v5h-5zM412,876h6v6h-6zM786,387h5v5h-5zM117,811h6v6h-6zM221,346h4v4h-4zM14,760h8v8h-8zM743,445h6v6h-6zM497,126h8v8h-8zM6,216h8v8h-8zM752,523h8v8h-8zM907,594h5v5h-5zM729,571h8v8h-8zM464,231h4v4h-4zM959,216h8v8h-8zM764,560h6v6h-6zM911,430h4v4h-4zM666,364h5v5h-5zM959,292h4v4h-4zM417,436h4v4h-4zM41,484h5v5h-5zM768,847h5v5h-5zM557,90h8v8h-8zM580,638h4v4h-4zM685,738h6v6h-6zM440,844h5v5h-5zM1062,164h4v4h-4zM782,546h4v4h-4zM271,340h4v4h-4zM14,373h8v8h-8zM674,601h6v6h-6zM117,270h8v8h-8zM1008,469h5v5h-5zM1066,855h8v8h-8zM227,115h4v4h-4zM868,565h8v8h-8zM688,641h5v5h-5zM379,569h8v8h-8zM502,262h5v5h-5zM836,418h5v5h-5zM287,335h6v6h-6zM1054,604h8v8h-8zM3,642h6v6h-6zM384,582h6v6h-6zM514,381h4v4h-4zM707,323h6v6h-6zM916,51h6v6h-6zM840,125h6v6h-6zM679,13h4v4h-4zM225,64h6v6h-6zM268,90h5v5h-5zM916,165h8v8h-8zM371,136h8v8h-8zM849,149h4v4h-4zM717,796h6v6h-6zM212,617h4v4h-4zM795,390h4v4h-4zM595,235h5v5h-5zM887,421h4v4h-4zM519,806h8v8h-8zM264,147h4v4h-4zM172,285h8v8h-8zM713,748h6v6h-6zM456,890h4v4h-4zM194,321h4v4h-4zM22,41h6v6h-6zM867,84h8v8h-8zM520,799h4v4h-4zM229,370h5v5h-5zM363,767h6v6h-6zM366,693h5v5h-5zM305,304h6v6h-6zM594,736h6v6h-6zM381,439h6v6h-6zM540,242h6v6h-6zM1045,583h4v4h-4zM355,282h6v6h-6zM137,866h4v4h-4zM841,36h8v8h-8zM585,44h6v6h-6zM116,41h8v8h-8zM653,586h8v8h-8zM661,558h4v4h-4zM228,594h8v8h-8zM670,155h5v5h-5zM932,375h4v4h-4zM980,584h6v6h-6zM935,123h6v6h-6zM603,230h6v6h-6zM198,30h4v4h-4zM462,571h4v4h-4zM534,465h4v4h-4zM829,375h8v8h-8zM479,13h8v8h-8zM637,884h5v5h-5zM510,367h4v4h-4zM89,420h5v5h-5zM672,380h4v4h-4zM733,108h4v4h-4zM234,108h8v8h-8zM19,640h5v5h-5zM483,662h4v4h-4zM392,665h5v5h-5zM782,75h8v8h-8zM494,830h6v6h-6zM979,47h4v4h-4zM12,13h4v4h-4zM417,278h5v5h-5zM1027,743h4v4h-4zM339,844h8v8h-8zM504,148h4v4h-4zM389,574h8v8h-8zM511,693h8v8h-8zM1013,698h6v6h-6zM313,54h6v6h-6zM932,646h4v4h-4zM891,535h6v6h-6zM627,869h5v5h-5zM404,609h5v5h-5zM866,252h4v4h-4zM345,239h5v5h-5zM629,726h4v4h-4zM309,125h5v5h-5zM294,758h8v8h-8zM372,76h8v8h-8zM855,178h5v5h-5zM332,51h8v8h-8zM499,184h6v6h-6zM629,8h8v8h-8zM493,78h6v6h-6zM828,207h6v6h-6zM949,464h8v8h-8zM543,180h5v5h-5zM206,161h6v6h-6zM389,502h8v8h-8zM836,763h5v5h-5zM48,887h6v6h-6zM929,331h8v8h-8zM844,139h4v4h-4zM370,462h4v4h-4zM101,182h8v8h-8zM629,190h6v6h-6zM457,842h5v5h-5zM272,34h5v5h-5zM1066,337h4v4h-4zM55,496h8v8h-8zM522,753h4v4h-4zM925,569h4v4h-4zM757,80h6v6h-6zM605,570h8v8h-8zM196,756h6v6h-6zM1035,883h5v5h-5zM185,838h6v6h-6zM64,492h4v4h-4zM897,42h8v8h-8zM60,129h4v4h-4zM1007,602h6v6h-6zM632,393h4v4h-4zM505,331h8v8h-8zM133,428h5v5h-5zM473,719h4v4h-4zM502,812h4v4h-4zM168,741h4v4h-4zM1001,771h5v5h-5zM834,853h8v8h-8zM903,559h8v8h-8zM1042,287h5v5h-5zM512,559h5v5h-5zM356,655h5v5h-5zM765,493h5v5h-5zM471,133h8v8h-8zM441,139h6v6h-6zM612,264h5v5h-5zM279,97h8v8h-8zM968,102h4v4h-4zM676,701h5v5h-5zM600,743h4v4h-4zM276,179h6v6h-6zM463,233h5v5h-5zM992,87h6v6h-6zM446,144h6v6h-6zM155,569h8v8h-8zM865,303h5v5h-5zM475,703h6v6h-6zM199,387h8v8h-8zM234,508h5v5h-5zM904,464h5v5h-5zM763,175h4v4h-4zM889,791h8v8h-8zM816,156h5v5h-5zM657,630h5v5h-5zM625,180h4v4h-4zM742,462h4v4h-4zM556,309h6v6h-6zM903,769h8v8h-8zM97,364h8v8h-8zM143,592h5v5h-5zM199,740h6v6h-6zM39,625h4v4h-4zM382,830h4v4h-4zM129,636h6v6h-6zM835,773h4v4h-4zM313,96h8v8h-8zM479,23h5v5h-5zM22,861h5v5h-5zM664,149h6v6h-6zM268,727h4v4h-4zM21,824h5v5h-5zM280,745h8v8h-8zM561,625h4v4h-4zM376,84h5v5h-5zM48,110h8v8h-8zM628,678h4v4h-4zM131,361h5v5h-5zM581,202h5v5h-5zM158,510h8v8h-8zM176,735h8v8h-8zM744,531h4v4h-4zM424,838h6v6h-6zM363,214h6v6h-6zM767,750h6v6h-6zM874,754h4v4h-4zM348,131h6v6h-6zM267,376h4v4h-4zM391,472h4v4h-4zM348,179h4v4h-4zM242,374h8v8h-8zM832,834h4v4h-4zM868,787h4v4h-4zM37,571h6v6h-6zM984,555h4v4h-4zM666,223h4v4h-4zM465,846h6v6h-6zM121,309h5v5h-5zM129,529h6v6h-6zM91,525h5v5h-5zM472,455h6v6h-6zM982,514h6v6h-6zM261,78h6v6h-6zM900,543h5v5h-5zM697,179h6v6h-6zM494,488h8v8h-8zM503,276h5v5h-5zM358,168h8v8h-8zM1039,353h6v6h-6zM174,847h6v6h-6zM597,437h6v6h-6zM942,192h4v4h-4zM828,141h4v4h-4zM650,310h4v4h-4zM554,743h6v6h-6zM788,97h5v5h-5zM1061,603h5v5h-5zM447,595h5v5h-5zM724,549h6v6h-6zM880,461h8v8h-8zM288,561h5v5h-5zM443,92h8v8h-8zM821,521h8v8h-8zM426,884h5v5h-5zM448,697h4v4h-4zM407,403h8v8h-8zM309,314h6v6h-6zM419,494h8v8h-8zM695,6h8v8h-8zM408,267h6v6h-6zM861,388h8v8h-8zM623,78h6v6h-6zM347,751h5v5h-5zM1028,182h8v8h-8zM955,851h4v4h-4zM51,503h8v8h-8zM321,477h6v6h-6zM577,889h8v8h-8zM418,318h6v6h-6zM486,9h4v4h-4zM563,88h6v6h-6zM537,577h5v5h-5zM943,858h8v8h-8zM431,683h6v6h-6zM741,664h4v4h-4zM183,283h4v4h-4zM886,456h4v4h-4zM703,262h6v6h-6zM880,881h8v8h-8zM677,466h5v5h-5zM541,167h5v5h-5zM65,503h4v4h-4zM379,884h4v4h-4zM742,10h4v4h-4zM329,615h4v4h-4zM983,354h4v4h-4zM628,595h5v5h-5zM188,684h6v6h-6zM934,797h5v5h-5zM616,366h4v4h-4zM156,461h4v4h-4zM31,68h8v8h-8zM882,546h4v4h-4zM697,609h6v6h-6zM154,212h6v6h-6zM182,237h4v4h-4zM921,843h4v4h-4zM374,400h8v8h-8zM21,196h8v8h-8zM625,854h8v8h-8zM59,212h5v5h-5zM47,828h5v5h-5zM337,800h8v8h-8zM326,536h8v8h-8zM1050,60h8v8h-8zM724,520h8v8h-8zM331,779h8v8h-8zM24,773h4v4h-4zM186,319h5v5h-5zM8,785h8v8h-8zM602,102h8v8h-8zM360,580h4v4h-4zM453,813h5v5h-5zM415,416h6v6h-6zM254,31h4v4h-4zM366,139h5v5h-5zM99,240h5v5h-5zM595,416h5v5h-5zM171,314h8v8h-8zM404,853h5v5h-5zM319,424h5v5h-5zM244,403h5v5h-5zM1010,888h8v8h-8zM630,328h5v5h-5zM433,454h5v5h-5zM935,109h4v4h-4zM582,241h8v8h-8zM31,639h5v5h-5zM333,347h4v4h-4zM745,691h5v5h-5zM344,590h4v4h-4zM73,813h6v6h-6zM207,640h4v4h-4zM243,112h8v8h-8zM303,359h8v8h-8zM831,786h5v5h-5zM1004,157h6v6h-6zM729,591h6v6h-6zM962,22h8v8h-8zM266,754h6v6h-6zM971,87h6v6h-6zM124,812h5v5h-5zM764,36h4v4h-4zM652,383h6v6h-6zM167,657h6v6h-6zM675,838h5v5h-5zM611,638h6v6h-6zM992,596h6v6h-6zM1003,100h6v6h-6zM966,779h4v4h-4zM1044,606h4v4h-4zM848,187h6v6h-6zM803,77h8v8h-8zM1070,548h5v5h-5zM301,80h8v8h-8zM474,303h8v8h-8zM545,602h5v5h-5zM459,456h5v5h-5zM525,168h6v6h-6zM187,146h5v5h-5zM583,222h4v4h-4zM180,309h4v4h-4zM216,276h5v5h-5zM736,433h8v8h-8zM255,215h8v8h-8zM143,570h6v6h-6zM143,630h5v5h-5zM358,726h8v8h-8zM815,151h5v5h-5zM642,410h8v8h-8zM891,102h6v6h-6zM13,433h4v4h-4zM65,250h5v5h-5zM119,275h4v4h-4zM173,396h6v6h-6zM310,496h4v4h-4zM12,883h8v8h-8zM90,638h6v6h-6zM117,435h8v8h-8zM524,698h6v6h-6zM9,818h6v6h-6zM673,832h6v6h-6zM700,70h4v4h-4zM27,352h5v5h-5zM318,165h5v5h-5zM110,640h6v6h-6zM796,291h5v5h-5zM694,317h5v5h-5zM395,491h6v6h-6zM898,226h4v4h-4zM44,505h8v8h-8zM970,841h8v8h-8zM453,650h6v6h-6zM646,558h5v5h-5zM738,146h8v8h-8zM683,357h4v4h-4zM912,427h5v5h-5zM775,2h8v8h-8zM153,64h4v4h-4zM552,375h6v6h-6zM67,8h5v5h-5zM969,146h6v6h-6zM4,716h6v6h-6zM608,417h6v6h-6zM554,381h5v5h-5zM1045,856h4v4h-4zM870,53h6v6h-6zM653,264h8v8h-8zM1021,428h5v5h-5zM321,306h4v4h-4zM909,198h8v8h-8zM741,131h6v6h-6zM595,839h6v6h-6zM568,503h8v8h-8zM280,202h5v5h-5zM588,100h6v6h-6zM696,167h6v6h-6zM760,202h8v8h-8zM243,510h4v4h-4zM789,809h4v4h-4zM913,605h8v8h-8zM144,448h4v4h-4zM672,855h4v4h-4zM493,611h5v5h-5zM1038,171h8v8h-8zM831,122h4v4h-4zM433,42h4v4h-4zM16,529h5v5h-5zM493,107h5v5h-5zM457,791h5v5h-5zM603,817h6v6h-6zM180,663h6v6h-6zM862,655h4v4h-4zM885,109h6v6h-6zM550,467h6v6h-6zM774,39h6v6h-6zM107,488h4v4h-4zM37,810h5v5h-5zM273,172h8v8h-8zM23,880h8v8h-8zM122,19h4v4h-4zM79,230h5v5h-5zM594,258h8v8h-8zM896,524h6v6h-6zM577,614h6v6h-6zM1017,12h6v6h-6zM1066,434h8v8h-8zM936,712h4v4h-4zM80,552h8v8h-8zM904,861h8v8h-8zM422,777h4v4h-4zM387,470h6v6h-6zM958,524h4v4h-4zM227,729h8v8h-8zM355,417h6v6h-6zM337,299h8v8h-8zM358,18h8v8h-8zM939,542h5v5h-5zM779,128h8v8h-8zM293,445h6v6h-6zM383,510h5v5h-5zM1064,30h4v4h-4zM935,689h4v4h-4zM389,251h5v5h-5zM936,835h4v4h-4zM326,679h6v6h-6zM546,565h6v6h-6zM936,637h6v6h-6zM65,300h6v6h-6zM947,696h6v6h-6zM959,720h6v6h-6zM162,183h8v8h-8zM434,353h6v6h-6zM996,522h5v5h-5zM323,275h6v6h-6zM79,169h4v4h-4zM627,271h6v6h-6zM1059,318h8v8h-8zM773,821h8v8h-8zM342,156h6v6h-6zM586,675h6v6h-6zM254,18h4v4h-4zM428,178h6v6h-6zM926,577h5v5h-5zM259,51h5v5h-5zM644,71h6v6h-6zM771,4h6v6h-6zM576,779h6v6h-6zM989,189h6v6h-6zM930,24h8v8h-8zM435,604h6v6h-6zM187,768h4v4h-4zM93,545h8v8h-8zM1059,356h8v8h-8zM936,23h6v6h-6zM605,879h4v4h-4zM445,632h6v6h-6zM168,17h5v5h-5zM153,683h4v4h-4zM384,322h6v6h-6zM577,524h5v5h-5zM705,535h6v6h-6zM247,551h8v8h-8zM818,691h6v6h-6zM699,489h8v8h-8zM600,322h6v6h-6zM141,8h8v8h-8zM107,720h6v6h-6zM161,560h8v8h-8zM811,80h4v4h-4zM670,109h5v5h-5zM595,162h6v6h-6zM791,804h5v5h-5zM567,312h5v5h-5zM473,765h5v5h-5zM682,306h8v8h-8zM493,288h4v4h-4zM116,653h4v4h-4zM865,813h6v6h-6zM64,502h8v8h-8zM972,334h5v5h-5zM33,18h8v8h-8zM259,315h6v6h-6zM814,572h6v6h-6zM943,444h5v5h-5zM512,831h6v6h-6zM1023,122h6v6h-6zM303,295h8v8h-8zM935,222h6v6h-6zM732,532h8v8h-8zM227,46h5v5h-5zM913,655h4v4h-4zM836,768h5v5h-5zM466,124h6v6h-6zM734,716h5v5h-5zM1044,8h6v6h-6zM162,655h4v4h-4zM805,413h8v8h-8zM97,302h8v8h-8zM945,872h4v4h-4zM627,179h4v4h-4zM41,449h5v5h-5zM616,622h4v4h-4zM52,796h4v4h-4zM942,107h8v8h-8zM1040,468h4v4h-4zM192,610h5v5h-5zM679,486h4v4h-4zM568,747h4v4h-4zM375,191h5v5h-5zM784,243h5v5h-5zM16,239h4v4h-4zM211,43h6v6h-6zM286,290h4v4h-4zM700,484h6v6h-6zM740,874h6v6h-6zM428,283h8v8h-8zM411,135h8v8h-8zM945,715h4v4h-4zM256,446h6v6h-6zM744,650h5v5h-5zM885,590h4v4h-4zM904,698h4v4h-4zM435,497h8v8h-8zM588,281h4v4h-4zM508,576h8v8h-8zM547,527h8v8h-8zM251,560h8v8h-8zM381,57h6v6h-6zM657,603h6v6h-6zM77,710h5v5h-5zM990,681h6v6h-6zM974,421h6v6h-6zM560,424h5v5h-5zM1071,59h6v6h-6zM562,469h6v6h-6zM256,153h8v8h-8zM191,843h4v4h-4zM345,322h8v8h-8zM132,137h6v6h-6zM402,325h6v6h-6zM485,78h8v8h-8zM311,397h4v4h-4zM482,426h5v5h-5zM813,133h5v5h-5zM393,463h5v5h-5zM668,466h8v8h-8zM271,495h4v4h-4zM612,51h5v5h-5zM329,485h6v6h-6zM274,236h8v8h-8zM98,566h4v4h-4zM216,377h6v6h-6zM662,331h4v4h-4zM769,334h4v4h-4zM764,263h8v8h-8zM462,541h6v6h-6zM378,343h5v5h-5zM991,171h6v6h-6zM68,181h4v4h-4zM86,397h8v8h-8zM564,442h4v4h-4zM116,502h8v8h-8zM751,388h8v8h-8zM189,58h8v8h-8zM527,455h4v4h-4zM719,659h8v8h-8zM581,824h6v6h-6zM594,685h8v8h-8zM127,196h4v4h-4zM612,14h8v8h-8zM95,670h8v8h-8zM59,606h6v6h-6zM518,49h8v8h-8zM904,125h8v8h-8zM876,776h5v5h-5zM344,169h4v4h-4zM200,480h6v6h-6zM93,342h6v6h-6zM596,455h8v8h-8zM730,273h5v5h-5zM929,714h6v6h-6zM327,117h5v5h-5zM576,333h8v8h-8zM704,632h5v5h-5zM392,713h5v5h-5zM489,629h4v4h-4zM782,8h4v4h-4zM438,503h6v6h-6zM38,196h8v8h-8zM313,632h8v8h-8zM435,648h5v5h-5zM941,51h8v8h-8zM920,111h5v5h-5zM925,64h8v8h-8zM193,821h5v5h-5zM534,600h6v6h-6zM860,476h5v5h-5zM156,817h5v5h-5zM553,414h5v5h-5zM841,846h8v8h-8zM240,742h8v8h-8zM735,138h4v4h-4zM990,119h5v5h-5zM896,261h5v5h-5zM938,710h5v5h-5zM332,230h5v5h-5zM163,711h5v5h-5zM420,29h8v8h-8zM167,259h4v4h-4zM212,133h5v5h-5zM461,604h4v4h-4zM42,313h5v5h-5zM1068,836h4v4h-4zM312,310h8v8h-8zM953,813h5v5h-5zM520,769h4v4h-4zM216,419h5v5h-5zM620,267h4v4h-4zM1037,306h5v5h-5zM704,45h6v6h-6zM375,428h6v6h-6zM796,159h6v6h-6zM867,644h8v8h-8zM103,491h5v5h-5zM638,411h4v4h-4zM42,516h8v8h-8zM693,117h6v6h-6zM82,648h5v5h-5zM385,590h4v4h-4zM356,750h8v8h-8zM325,233h4v4h-4zM942,104h8v8h-8zM290,482h6v6h-6zM501,146h4v4h-4zM543,327h5v5h-5zM304,494h5v5h-5zM974,647h5v5h-5zM955,13h4v4h-4zM524,704h5v5h-5zM739,204h5v5h-5zM165,235h4v4h-4zM455,556h4v4h-4zM313,793h4v4h-4zM712,194h5v5h-5zM638,698h4v4h-4zM881,65h6v6h-6zM1054,37h5v5h-5zM873,304h8v8h-8zM634,163h6v6h-6zM1008,367h8v8h-8zM35,702h5v5h-5zM787,604h5v5h-5zM855,685h5v5h-5zM212,195h6v6h-6zM760,60h4v4h-4zM849,427h8v8h-8zM563,294h4v4h-4zM806,566h5v5h-5zM929,45h6v6h-6zM843,82h6v6h-6zM625,715h8v8h-8zM721,664h5v5h-5zM278,617h6v6h-6zM970,663h5v5h-5zM467,734h6v6h-6zM802,528h4v4h-4zM73,697h6v6h-6zM805,754h5v5h-5zM212,408h5v5h-5zM941,512h4v4h-4zM420,698h6v6h-6zM885,362h4v4h-4zM245,598h6v6h-6zM711,805h8v8h-8zM850,4h8v8h-8zM647,846h8v8h-8zM449,538h8v8h-8zM156,485h4v4h-4zM379,752h4v4h-4zM313,78h6v6h-6zM201,792h8v8h-8zM709,718h4v4h-4zM232,558h8v8h-8zM882,164h6v6h-6zM357,134h5v5h-5zM240,792h8v8h-8zM331,283h5v5h-5zM918,862h8v8h-8zM565,0h5v5h-5zM111,219h6v6h-6zM790,602h8v8h-8zM145,670h6v6h-6zM714,68h6v6h-6zM476,852h6v6h-6zM327,631h8v8h-8zM1005,720h4v4h-4zM973,443h6v6h-6zM741,16h4v4h-4zM598,398h5v5h-5zM781,667h4v4h-4zM1016,429h4v4h-4zM1022,793h5v5h-5zM201,817h4v4h-4zM1070,154h6v6h-6zM672,215h4v4h-4zM451,871h4v4h-4zM863,602h8v8h-8zM528,867h6v6h-6zM741,247h5v5h-5zM894,441h4v4h-4zM851,309h5v5h-5zM215,719h4v4h-4zM174,657h5v5h-5zM730,808h6v6h-6zM1041,692h6v6h-6zM1031,167h6v6h-6zM955,423h6v6h-6zM995,359h6v6h-6zM388,284h8v8h-8zM286,182h8v8h-8zM537,363h5v5h-5zM835,280h5v5h-5zM299,477h8v8h-8zM807,245h6v6h-6zM769,352h6v6h-6zM913,108h8v8h-8zM827,37h6v6h-6zM379,837h6v6h-6zM1051,788h4v4h-4zM808,603h8v8h-8zM894,633h6v6h-6zM178,157h4v4h-4zM830,351h6v6h-6zM429,445h6v6h-6zM375,165h5v5h-5zM570,464h6v6h-6zM143,301h4v4h-4zM991,59h4v4h-4zM913,594h8v8h-8zM433,511h6v6h-6zM842,605h5v5h-5zM162,598h5v5h-5zM537,800h4v4h-4zM797,731h8v8h-8zM942,117h8v8h-8zM656,245h4v4h-4zM827,538h6v6h-6zM651,804h6v6h-6zM101,602h4v4h-4zM386,622h4v4h-4zM131,849h5v5h-5zM4,560h5v5h-5zM479,448h8v8h-8zM633,530h4v4h-4zM42,736h4v4h-4zM519,262h6v6h-6zM1034,472h5v5h-5zM234,706h5v5h-5zM302,867h4v4h-4zM239,154h6v6h-6zM454,56h6v6h-6zM777,521h8v8h-8zM418,850h8v8h-8zM243,772h4v4h-4zM862,856h6v6h-6zM705,224h8v8h-8zM617,384h8v8h-8zM204,548h4v4h-4zM432,251h5v5h-5zM82,799h4v4h-4zM470,176h5v5h-5zM829,179h6v6h-6zM801,844h4v4h-4zM67,183h4v4h-4zM896,571h6v6h-6zM598,559h6v6h-6zM1063,272h4v4h-4zM793,615h8v8h-8zM964,716h8v8h-8zM828,305h5v5h-5zM390,787h8v8h-8zM1062,811h6v6h-6zM511,732h5v5h-5zM911,470h6v6h-6zM545,186h6v6h-6zM704,834h5v5h-5zM761,841h8v8h-8zM830,646h5v5h-5zM870,749h5v5h-5zM148,99h8v8h-8zM30,724h4v4h-4zM497,38h4v4h-4zM920,301h8v8h-8zM519,569h5v5h-5zM8,182h6v6h-6zM410,93h5v5h-5zM1013,392h8v8h-8zM817,507h4v4h-4zM924,150h5v5h-5zM768,418h8v8h-8zM650,105h8v8h-8zM642,56h5v5h-5zM858,791h4v4h-4zM421,701h5v5h-5zM680,660h4v4h-4zM260,808h5v5h-5zM861,34h4v4h-4zM431,838h5v5h-5zM831,39h8v8h-8zM282,137h4v4h-4zM513,851h4v4h-4zM200,718h5v5h-5zM660,288h8v8h-8zM982,2h4v4h-4zM596,731h4v4h-4zM757,589h6v6h-6zM490,597h5v5h-5zM26,738h8v8h-8zM224,630h5v5h-5zM720,875h4v4h-4zM585,314h4v4h-4zM94,213h4v4h-4zM96,244h6v6h-6zM817,132h6v6h-6zM824,6h4v4h-4zM47,608h5v5h-5zM558,406h8v8h-8zM990,511h5v5h-5zM982,652h4v4h-4zM979,745h4v4h-4zM718,120h8v8h-8zM859,49h6v6h-6zM474,629h6v6h-6zM844,753h4v4h-4zM348,84h8v8h-8zM175,843h8v8h-8zM817,745h6v6h-6zM294,222h8v8h-8zM577,303h6v6h-6zM987,293h5v5h-5zM954,707h5v5h-5zM112,735h6v6h-6zM456,300h4v4h-4zM576,859h5v5h-5zM227,48h5v5h-5zM1005,363h4v4h-4zM694,194h4v4h-4zM766,384h4v4h-4zM1061,157h8v8h-8zM658,148h6v6h-6zM807,221h6v6h-6zM1030,82h5v5h-5zM687,550h5v5h-5zM703,532h8v8h-8zM326,57h4v4h-4zM574,65h4v4h-4zM152,100h8v8h-8zM695,454h6v6h-6zM987,401h4v4h-4zM273,351h5v5h-5zM477,648h4v4h-4zM923,410h6v6h-6zM892,27h5v5h-5zM114,186h6v6h-6zM719,247h4v4h-4zM907,65h4v4h-4zM169,587h6v6h-6zM709,161h5v5h-5zM516,745h4v4h-4zM411,580h5v5h-5zM67,263h6v6h-6zM914,116h6v6h-6zM390,643h5v5h-5zM396,656h6v6h-6zM393,466h4v4h-4zM935,809h5v5h-5zM306,339h4v4h-4zM240,173h5v5h-5zM818,759h5v5h-5zM688,420h4v4h-4zM54,591h6v6h-6zM252,26h8v8h-8zM523,98h8v8h-8zM100,105h8v8h-8zM990,810h8v8h-8zM472,105h4v4h-4zM285,395h5v5h-5zM1004,494h4v4h-4zM546,431h5v5h-5zM603,774h8v8h-8zM118,840h4v4h-4zM257,152h6v6h-6zM228,74h6v6h-6zM502,842h5v5h-5zM80,403h6v6h-6zM105,250h6v6h-6zM73,626h8v8h-8zM516,160h4v4h-4zM673,722h4v4h-4zM690,611h4v4h-4zM576,208h8v8h-8zM712,124h6v6h-6zM155,715h6v6h-6zM794,763h6v6h-6zM704,579h5v5h-5zM17,408h4v4h-4zM482,757h6v6h-6zM471,125h5v5h-5zM326,279h5v5h-5z" fill="#183428" opacity="0.5"/>
<path d="M1007,358h5v5h-5zM728,11h5v5h-5zM1017,207h5v5h-5zM511,455h5v5h-5zM1017,438h5v5h-5zM1063,553h5v5h-5zM232,742h5v5h-5zM216,890h5v5h-5zM489,201h5v5h-5zM1030,286h5v5h-5zM436,305h5v5h-5zM717,20h5v5h-5zM401,144h5v5h-5zM888,0h5v5h-5zM651,229h5v5h-5zM487,500h5v5h-5zM763,123h5v5h-5zM258,107h5v5h-5zM1029,133h5v5h-5zM147,465h5v5h-5zM623,789h5v5h-5zM61,209h5v5h-5zM180,521h5v5h-5zM485,364h5v5h-5zM952,589h5v5h-5zM922,852h5v5h-5zM288,838h5v5h-5zM437,46h5v5h-5zM981,93h5v5h-5zM19,258h5v5h-5zM310,861h5v5h-5zM933,374h5v5h-5zM567,755h5v5h-5zM865,582h5v5h-5zM550,104h5v5h-5zM261,586h5v5h-5zM629,713h5v5h-5zM963,857h5v5h-5zM207,68h5v5h-5zM962,508h5v5h-5zM195,616h5v5h-5zM274,211h5v5h-5zM393,466h5v5h-5zM726,65h5v5h-5zM795,556h5v5h-5zM506,598h5v5h-5zM857,9h5v5h-5zM510,603h5v5h-5zM760,576h5v5h-5zM193,853h5v5h-5zM842,207h5v5h-5zM462,853h5v5h-5zM222,364h5v5h-5zM1031,801h5v5h-5zM249,654h5v5h-5zM386,590h5v5h-5zM822,114h5v5h-5zM239,191h5v5h-5zM285,32h5v5h-5zM146,361h5v5h-5zM451,69h5v5h-5zM624,839h5v5h-5zM619,317h5v5h-5zM755,389h5v5h-5zM188,429h5v5h-5zM19,602h5v5h-5zM173,329h5v5h-5zM1032,682h5v5h-5zM896,571h5v5h-5zM680,627h5v5h-5zM1036,175h5v5h-5zM821,268h5v5h-5zM274,731h5v5h-5zM644,756h5v5h-5zM938,524h5v5h-5zM213,13h5v5h-5zM573,646h5v5h-5zM292,62h5v5h-5zM5,154h5v5h-5zM746,4h5v5h-5zM247,236h5v5h-5zM762,879h5v5h-5zM21,102h5v5h-5zM1002,863h5v5h-5zM159,298h5v5h-5zM560,285h5v5h-5zM447,426h5v5h-5zM277,49h5v5h-5zM90,145h5v5h-5zM98,555h5v5h-5zM747,234h5v5h-5zM849,649h5v5h-5zM366,438h5v5h-5zM202,827h5v5h-5zM601,46h5v5h-5zM165,616h5v5h-5zM413,638h5v5h-5zM246,709h5v5h-5zM860,84h5v5h-5zM628,170h5v5h-5zM759,716h5v5h-5zM848,206h5v5h-5zM100,590h5v5h-5zM606,123h5v5h-5zM207,518h5v5h-5zM116,564h5v5h-5zM258,230h5v5h-5zM454,475h5v5h-5zM777,28h5v5h-5zM777,197h5v5h-5zM312,569h5v5h-5zM741,547h5v5h-5zM967,182h5v5h-5zM334,590h5v5h-5zM280,140h5v5h-5zM243,686h5v5h-5zM887,637h5v5h-5zM1028,707h5v5h-5zM332,281h5v5h-5zM773,50h5v5h-5zM653,79h5v5h-5zM53,457h5v5h-5zM162,829h5v5h-5zM940,411h5v5h-5zM212,106h5v5h-5zM543,464h5v5h-5zM389,638h5v5h-5zM567,690h5v5h-5zM114,62h5v5h-5zM415,430h5v5h-5zM271,595h5v5h-5zM238,283h5v5h-5zM511,634h5v5h-5zM826,331h5v5h-5zM479,826h5v5h-5zM1001,551h5v5h-5zM113,406h5v5h-5zM683,248h5v5h-5zM40,873h5v5h-5zM975,115h5v5h-5zM499,551h5v5h-5zM322,61h5v5h-5zM805,686h5v5h-5zM469,76h5v5h-5zM422,84h5v5h-5zM1033,46h5v5h-5zM309,683h5v5h-5zM145,95h5v5h-5zM76,146h5v5h-5zM570,741h5v5h-5zM181,155h5v5h-5zM820,379h5v5h-5zM362,110h5v5h-5zM260,865h5v5h-5zM125,231h5v5h-5zM794,794h5v5h-5zM969,421h5v5h-5zM1025,538h5v5h-5zM309,414h5v5h-5zM768,653h5v5h-5zM139,172h5v5h-5zM1027,95h5v5h-5zM872,302h5v5h-5zM266,227h5v5h-5zM503,882h5v5h-5zM159,761h5v5h-5zM344,154h5v5h-5zM798,304h5v5h-5zM201,372h5v5h-5zM881,768h5v5h-5zM616,9h5v5h-5zM818,540h5v5h-5zM964,847h5v5h-5zM351,755h5v5h-5zM878,237h5v5h-5zM392,333h5v5h-5zM378,337h5v5h-5zM118,202h5v5h-5zM975,365h5v5h-5zM682,790h5v5h-5zM810,217h5v5h-5zM986,716h5v5h-5zM1062,648h5v5h-5zM809,724h5v5h-5zM271,584h5v5h-5zM408,747h5v5h-5zM143,480h5v5h-5zM361,730h5v5h-5zM370,751h5v5h-5zM909,782h5v5h-5zM149,835h5v5h-5zM798,602h5v5h-5zM699,43h5v5h-5zM933,488h5v5h-5zM489,302h5v5h-5zM839,696h5v5h-5zM932,191h5v5h-5zM365,222h5v5h-5zM108,291h5v5h-5zM28,709h5v5h-5zM243,63h5v5h-5zM73,660h5v5h-5zM213,411h5v5h-5zM431,714h5v5h-5zM1023,276h5v5h-5zM678,796h5v5h-5zM504,801h5v5h-5zM787,277h5v5h-5zM937,510h5v5h-5zM114,523h5v5h-5zM889,461h5v5h-5zM519,371h5v5h-5zM944,592h5v5h-5zM223,323h5v5h-5zM389,853h5v5h-5zM746,111h5v5h-5zM980,31h5v5h-5zM633,385h5v5h-5zM769,382h5v5h-5zM99,466h5v5h-5zM879,702h5v5h-5zM382,198h5v5h-5zM798,714h5v5h-5zM235,786h5v5h-5zM1064,386h5v5h-5zM408,632h5v5h-5zM997,180h5v5h-5zM323,293h5v5h-5zM785,166h5v5h-5zM586,445h5v5h-5zM717,127h5v5h-5zM1026,890h5v5h-5zM601,708h5v5h-5zM197,810h5v5h-5zM591,676h5v5h-5zM931,322h5v5h-5zM991,185h5v5h-5zM25,447h5v5h-5zM963,801h5v5h-5zM1024,455h5v5h-5zM1000,498h5v5h-5zM154,562h5v5h-5zM861,377h5v5h-5zM645,231h5v5h-5zM296,374h5v5h-5zM550,417h5v5h-5zM99,5h5v5h-5zM365,638h5v5h-5zM802,211h5v5h-5zM274,460h5v5h-5zM188,537h5v5h-5zM969,180h5v5h-5zM628,642h5v5h-5zM803,634h5v5h-5zM762,243h5v5h-5zM899,823h5v5h-5zM56,840h5v5h-5zM474,77h5v5h-5zM75,709h5v5h-5zM726,126h5v5h-5zM493,568h5v5h-5zM1069,299h5v5h-5zM822,218h5v5h-5zM213,143h5v5h-5zM440,550h5v5h-5zM325,144h5v5h-5zM234,76h5v5h-5zM207,281h5v5h-5zM541,163h5v5h-5zM514,391h5v5h-5zM1043,433h5v5h-5zM1013,420h5v5h-5zM212,527h5v5h-5zM155,151h5v5h-5zM79,624h5v5h-5zM1037,359h5v5h-5zM380,378h5v5h-5zM377,615h5v5h-5zM420,136h5v5h-5zM927,510h5v5h-5zM7,756h5v5h-5zM781,315h5v5h-5zM675,819h5v5h-5zM431,385h5v5h-5zM320,493h5v5h-5zM710,654h5v5h-5zM1018,129h5v5h-5zM392,758h5v5h-5zM848,525h5v5h-5zM726,303h5v5h-5zM1013,489h5v5h-5zM432,162h5v5h-5zM124,799h5v5h-5zM858,24h5v5h-5zM346,427h5v5h-5zM531,323h5v5h-5zM960,311h5v5h-5zM570,827h5v5h-5zM685,424h5v5h-5zM357,345h5v5h-5zM653,700h5v5h-5zM279,330h5v5h-5zM416,323h5v5h-5zM979,480h5v5h-5zM296,296h5v5h-5zM881,143h5v5h-5zM740,19h5v5h-5zM207,53h5v5h-5zM864,131h5v5h-5zM244,51h5v5h-5zM283,653h5v5h-5zM772,810h5v5h-5zM1015,490h5v5h-5zM988,80h5v5h-5zM992,386h5v5h-5zM207,666h5v5h-5zM920,343h5v5h-5zM100,777h5v5h-5zM808,531h5v5h-5zM1047,34h5v5h-5zM60,111h5v5h-5zM23,630h5v5h-5zM675,100h5v5h-5zM174,161h5v5h-5zM653,599h5v5h-5zM1039,321h5v5h-5zM1049,387h5v5h-5zM419,225h5v5h-5zM249,867h5v5h-5zM1067,628h5v5h-5zM188,160h5v5h-5zM163,312h5v5h-5zM790,52h5v5h-5zM568,606h5v5h-5zM36,391h5v5h-5zM848,512h5v5h-5zM484,784h5v5h-5zM644,300h5v5h-5zM424,840h5v5h-5zM921,814h5v5h-5zM601,127h5v5h-5zM188,341h5v5h-5zM740,4h5v5h-5zM860,700h5v5h-5zM552,5h5v5h-5zM856,369h5v5h-5zM718,507h5v5h-5zM781,364h5v5h-5zM1029,850h5v5h-5zM996,548h5v5h-5zM339,335h5v5h-5zM288,804h5v5h-5zM849,701h5v5h-5zM880,882h5v5h-5zM738,283h5v5h-5zM812,233h5v5h-5zM655,141h5v5h-5zM919,435h5v5h-5zM295,821h5v5h-5zM89,828h5v5h-5zM811,133h5v5h-5zM816,510h5v5h-5zM973,522h5v5h-5zM458,831h5v5h-5zM94,692h5v5h-5zM110,246h5v5h-5zM122,775h5v5h-5zM474,646h5v5h-5zM275,650h5v5h-5zM695,87h5v5h-5zM529,642h5v5h-5zM230,582h5v5h-5zM298,330h5v5h-5zM986,839h5v5h-5zM1070,380h5v5h-5zM613,720h5v5h-5zM813,406h5v5h-5zM926,357h5v5h-5zM1018,421h5v5h-5zM127,667h5v5h-5zM155,605h5v5h-5zM57,880h5v5h-5zM580,659h5v5h-5zM141,567h5v5h-5zM404,222h5v5h-5zM874,30h5v5h-5zM512,77h5v5h-5zM913,795h5v5h-5zM37,413h5v5h-5zM503,640h5v5h-5zM782,305h5v5h-5zM1000,165h5v5h-5zM146,725h5v5h-5zM129,165h5v5h-5zM536,299h5v5h-5zM176,828h5v5h-5zM508,699h5v5h-5zM268,812h5v5h-5zM237,807h5v5h-5zM657,864h5v5h-5z" fill="#a3b89c" opacity="0.35"/>
<path d="M185.0,0.0 L0.0,520.0" fill="none" stroke="#d5b58a" stroke-width="3.5" stroke-dasharray="8,7" opacity="0.5"/>
<path d="M0.0,130.0 L400.0,270.0 L560.0,300.0 L760.0,320.0 L1080.0,375.0" fill="none" stroke="#d5b58a" stroke-width="3.5" stroke-dasharray="8,7" opacity="0.5"/>
<path d="M0.0,700.0 L300.0,830.0" fill="none" stroke="#d5b58a" stroke-width="3.5" stroke-dasharray="8,7" opacity="0.5"/>
<path d="M845.0,0.0 L790.0,150.0" fill="none" stroke="#d5b58a" stroke-width="3.5" stroke-dasharray="8,7" opacity="0.5"/>
<path d="M40.0,450.0 L300.0,560.0" fill="none" stroke="#d5b58a" stroke-width="3.5" stroke-dasharray="8,7" opacity="0.5"/>
<path d="M440.0,65.0 L437.0,280.0" fill="none" stroke="#d5b58a" stroke-width="3.5" stroke-dasharray="8,7" opacity="0.5"/>
<path d="M880.0,0.0 L830.0,200.0" fill="none" stroke="#d5b58a" stroke-width="3.5" stroke-dasharray="8,7" opacity="0.5"/>
<path d="M694.0,265.0 C701.7,267.5 722.3,280.5 740.0,280.0 C757.7,279.5 780.8,263.7 800.0,262.0 C819.2,260.3 837.5,266.2 855.0,270.0 C872.5,273.8 893.3,288.3 905.0,285.0 C916.7,281.7 920.0,263.3 925.0,250.0 C930.0,236.7 925.8,214.2 935.0,205.0 C944.2,195.8 964.2,202.5 980.0,195.0 C995.8,187.5 1013.3,170.8 1030.0,160.0 C1046.7,149.2 1071.7,135.0 1080.0,130.0" fill="none" stroke="#3b2a26" stroke-width="8" opacity="0.9"/>
<path d="M790.0,530.0 C801.7,530.8 836.7,530.0 860.0,535.0 C883.3,540.0 906.7,551.7 930.0,560.0 C953.3,568.3 985.0,575.0 1000.0,585.0 C1015.0,595.0 1021.7,607.5 1020.0,620.0 C1018.3,632.5 1005.0,643.3 990.0,660.0 C975.0,676.7 936.7,696.7 930.0,720.0 C923.3,743.3 939.2,780.8 950.0,800.0 C960.8,819.2 1003.3,825.0 995.0,835.0 C986.7,845.0 935.8,865.8 900.0,860.0 C864.2,854.2 806.7,819.2 780.0,800.0 C753.3,780.8 770.0,755.0 740.0,745.0 C710.0,735.0 630.0,730.8 600.0,740.0 C570.0,749.2 580.0,790.0 560.0,800.0 C540.0,810.0 501.7,802.5 480.0,800.0 C458.3,797.5 441.7,780.0 430.0,785.0 C418.3,790.0 413.3,822.5 410.0,830.0" fill="none" stroke="#3b2a26" stroke-width="8" opacity="0.9"/>
<path d="M410.0,830.0 C418.3,838.3 435.0,868.3 460.0,880.0 C485.0,891.7 543.3,896.7 560.0,900.0" fill="none" stroke="#a87860" stroke-width="8" opacity="0.8"/>
<path d="M650.0,270.0 C649.7,280.0 656.3,317.5 648.0,330.0 C639.7,342.5 610.5,336.7 600.0,345.0 C589.5,353.3 588.7,364.2 585.0,380.0 C581.3,395.8 572.2,425.0 578.0,440.0 C583.8,455.0 613.3,456.7 620.0,470.0 C626.7,483.3 608.0,512.5 618.0,520.0 C628.0,527.5 651.3,514.2 680.0,515.0 C708.7,515.8 771.7,523.3 790.0,525.0" fill="none" stroke="#6f86c8" stroke-width="7"/>
<path d="M660,255 L690,250 L720,300 L690,320 L660,300 Z" fill="#c8a27a" opacity="0.8"/>
</g>
<rect x="995" y="228" width="253" height="209" filter="url(#noise)" opacity="0.45"/>
</g>
<line x1="1205.5" y1="443.5" x2="1205.5" y2="494.9" stroke="#5e5e5e" stroke-width="1"/>
<text x="1101.3" y="472.1" font-size="9.2" textLength="181.0" lengthAdjust="spacingAndGlyphs" font-weight="bold" text-anchor="middle" fill="#111" stroke="#111" stroke-width="0.35">LEVANTAMENTO PLANIALTIMÉTRICO</text>
<text x="1226.5" y="466.1" font-size="8.0" textLength="27.0" lengthAdjust="spacingAndGlyphs" text-anchor="middle" fill="#222">FOLHA</text>
<text x="1226.5" y="477.9" font-size="8.0" textLength="25.3" lengthAdjust="spacingAndGlyphs" text-anchor="middle" fill="#222">ÚNICA</text>
<text x="1000.1" y="510.2" font-size="5.8" textLength="40.0" lengthAdjust="spacingAndGlyphs" fill="#2a2a2a">Propriedade:</text>
<text x="1000.1" y="529.3" font-size="5.8" textLength="38.5" lengthAdjust="spacingAndGlyphs" fill="#2a2a2a">Proprietário:</text>
<text x="1000.1" y="548.3" font-size="5.8" textLength="33.0" lengthAdjust="spacingAndGlyphs" fill="#2a2a2a">Município:</text>
<text x="1000.1" y="557.8" font-size="5.8" textLength="29.5" lengthAdjust="spacingAndGlyphs" fill="#2a2a2a">Comarca:</text>
<text x="1000.1" y="567.6" font-size="5.8" textLength="36.0" lengthAdjust="spacingAndGlyphs" fill="#2a2a2a">Estado (UF)</text>
<text x="1000.1" y="577.3" font-size="5.8" textLength="27.0" lengthAdjust="spacingAndGlyphs" fill="#2a2a2a">Cartório:</text>
<text x="1000.1" y="586.8" font-size="5.8" textLength="30.0" lengthAdjust="spacingAndGlyphs" fill="#2a2a2a">Matrícula:</text>
<text x="1000.1" y="596.4" font-size="5.8" textLength="37.0" lengthAdjust="spacingAndGlyphs" fill="#2a2a2a">Cód. INCRA:</text>
<text x="1000.1" y="606.0" font-size="5.8" textLength="16.5" lengthAdjust="spacingAndGlyphs" fill="#2a2a2a">Data:</text>
<text x="1000.1" y="615.5" font-size="5.8" textLength="62.2" lengthAdjust="spacingAndGlyphs" fill="#2a2a2a">Data Levantamento:</text>
<line x1="1126.5" y1="625.5" x2="1126.5" y2="738.5" stroke="#5e5e5e" stroke-width="1"/>
<text x="1061.0" y="632.0" font-size="4.9" textLength="97.5" lengthAdjust="spacingAndGlyphs" text-anchor="middle" fill="#222">QUADRO DE ÁREAS E PERÍMETROS</text>
<text x="1187.0" y="632.0" font-size="4.9" textLength="97.5" lengthAdjust="spacingAndGlyphs" text-anchor="middle" fill="#222">QUADRO DE ÁREAS E PERÍMETROS</text>
<text x="1000.1" y="640.9" font-size="5.8" textLength="30.1" lengthAdjust="spacingAndGlyphs" fill="#111">Descrição</text>
<text x="1078.5" y="640.9" font-size="5.8" textLength="27.5" lengthAdjust="spacingAndGlyphs" fill="#111">Área (ha)</text>
<line x1="1000" y1="648.9" x2="1119.5" y2="648.9" stroke="#888" stroke-width="0.8" stroke-dasharray="1,1"/>
<text x="1000.1" y="660.4" font-size="5.8" textLength="41.9" lengthAdjust="spacingAndGlyphs" fill="#2a2a2a">Reserva Legal</text>
<text x="1000.1" y="669.9" font-size="5.8" textLength="12.9" lengthAdjust="spacingAndGlyphs" fill="#2a2a2a">APP</text>
<text x="1000.1" y="679.5" font-size="5.8" textLength="54.0" lengthAdjust="spacingAndGlyphs" fill="#2a2a2a">Área Consolidada</text>
<text x="1000.1" y="689.1" font-size="5.8" textLength="80.6" lengthAdjust="spacingAndGlyphs" fill="#2a2a2a">Vegetação Remanescente</text>
<text x="1000.1" y="737.0" font-size="5.8" textLength="14.4" lengthAdjust="spacingAndGlyphs" fill="#2a2a2a">Total</text>
<text x="1188.0" y="642.8" font-size="5.8" textLength="38.0" lengthAdjust="spacingAndGlyphs" text-anchor="middle" fill="#111">Proprietário:</text>
<line x1="1149" y1="671.1" x2="1226.5" y2="671.1" stroke="#555" stroke-width="0.9"/>
<text x="1187.8" y="681.0" font-size="5.8" textLength="18.6" lengthAdjust="spacingAndGlyphs" text-anchor="middle" fill="#111">Nome</text>
<text x="1187.7" y="690.6" font-size="5.8" textLength="12.0" lengthAdjust="spacingAndGlyphs" text-anchor="middle" fill="#111">CPF</text>
<line x1="1147.5" y1="710.3" x2="1228" y2="710.3" stroke="#555" stroke-width="0.9"/>
<text x="1187.8" y="719.7" font-size="5.8" textLength="64.0" lengthAdjust="spacingAndGlyphs" text-anchor="middle" fill="#111">Responsável Técnico</text>
<text x="1187.8" y="729.2" font-size="5.8" textLength="25.8" lengthAdjust="spacingAndGlyphs" text-anchor="middle" fill="#111">Registro</text>
</svg>
</body></html>
